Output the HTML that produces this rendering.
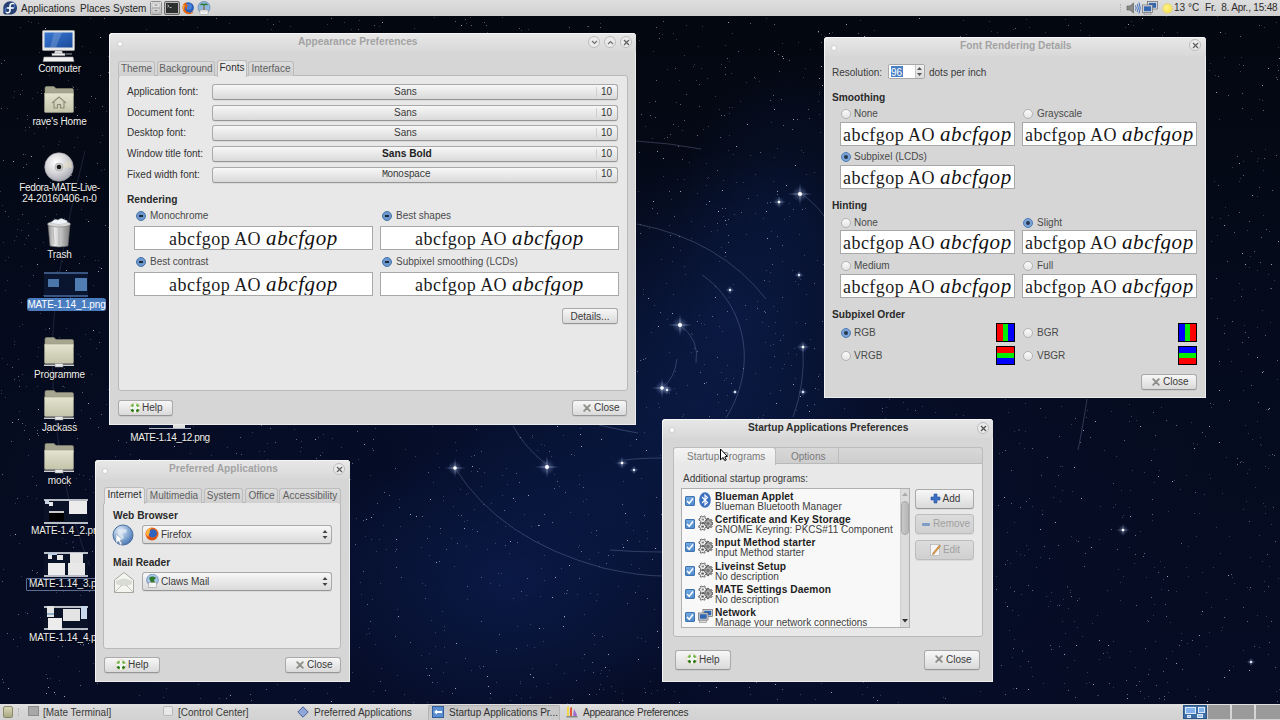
<!DOCTYPE html>
<html><head><meta charset="utf-8">
<style>
*{box-sizing:border-box;margin:0;padding:0}
html,body{width:1280px;height:720px;overflow:hidden}
body{position:relative;font-family:"Liberation Sans",sans-serif;font-size:10px;color:#3c3c3c;background:#050b1c}
.a{position:absolute}
#bg{position:absolute;left:0;top:0;width:1280px;height:720px;
background:
radial-gradient(ellipse 200px 150px at 510px 580px, rgba(12,32,84,.6), rgba(12,32,84,0) 100%),
radial-gradient(ellipse 220px 160px at 680px 440px, rgba(12,32,80,.5), rgba(12,32,80,0) 100%),
radial-gradient(ellipse 150px 170px at 730px 320px, rgba(14,34,86,.55), rgba(14,34,86,0) 100%),
radial-gradient(ellipse 110px 150px at 790px 210px, rgba(12,30,80,.4), rgba(12,30,80,0) 100%),
radial-gradient(ellipse 620px 360px at 600px 500px, rgba(8,20,64,.55), rgba(8,20,64,0) 100%),
radial-gradient(ellipse 120px 90px at 390px 470px, rgba(2,5,14,.45), rgba(2,5,14,0) 100%),
radial-gradient(ellipse 160px 60px at 620px 690px, rgba(2,5,14,.35), rgba(2,5,14,0) 100%),
linear-gradient(180deg,#03070f 0%,#050b1d 45%,#060c24 100%);}
.panel{position:absolute;left:0;width:1280px;height:16px;background:linear-gradient(#dcdcdc,#d2d2d2);}
.ptxt{position:absolute;font-size:10px;color:#2a2a2a;white-space:pre;line-height:12px}
.win{position:absolute;background:#d6d6d6;border-radius:4px 4px 0 0;box-shadow:inset 1px 1px 0 #f4f4f4, inset -1px -1px 0 #ececec;}
.tbar{position:absolute;left:0;top:0;right:0;height:19px;border-radius:4px 4px 0 0;background:linear-gradient(#e8e8e8,#d8d8d8);box-shadow:inset 1px 1px 0 #f6f6f6}
.title{position:absolute;top:3px;left:0;right:0;text-align:center;font-weight:bold;font-size:10.2px;color:#a0a0a0;white-space:pre;line-height:12px}
.dot{position:absolute;width:4px;height:4px;margin:1px 0 0 1px;border-radius:50%;background:#fff;box-shadow:0 0 0 1px #d2d2d2}
.wbtn{position:absolute;width:12px;height:12px;border-radius:50%;border:1px solid #bcbcbc;background:#ebebeb}
.pane{position:absolute;background:#e8e8e8;border:1px solid #b9b9b9;border-radius:3px}
.tab{position:absolute;height:15px;background:linear-gradient(#dcdcdc,#d0d0d0);border:1px solid #bcbcbc;border-bottom:none;border-radius:3px 3px 0 0;text-align:center;font-size:10px;line-height:14px;color:#606060;white-space:pre}
.tab.act{background:#e8e8e8;color:#2e2e2e;height:17px;z-index:2;line-height:13px}
.btn{position:absolute;border:1px solid #a9a9a9;border-bottom-color:#969696;border-radius:3px;background:linear-gradient(#f7f7f7,#dadada);box-shadow:0 1px 0 rgba(0,0,0,.06);text-align:center;color:#3a3a3a;font-size:10px;white-space:pre}
.lbl{position:absolute;white-space:pre;font-size:10px;line-height:12px;color:#333}
.b{font-weight:bold;font-size:10.2px}
.prev{position:absolute;background:#fff;border:1px solid #a8a8a8;font-family:"Liberation Serif",serif;color:#111;white-space:pre;text-align:center;overflow:hidden}
.prev i{font-style:italic;font-size:21px;letter-spacing:.6px}
.prev .r{font-size:18px;letter-spacing:.45px;color:#1a1a1a}
.p2{text-align:left;padding-left:2px;line-height:22px}
.radio{position:absolute;width:10px;height:10px;border-radius:50%;border:1px solid #b3b3b3;background:linear-gradient(#fbfbfb,#e4e4e4)}
.radio.on{background:#7ba3d6;border-color:#4f7cb5}
.radio.on::after{content:"";position:absolute;left:2px;top:2px;width:4px;height:4px;border-radius:50%;background:#25374e}
.rmin{position:absolute;width:10px;height:10px;border-radius:50%;background:#6b97cc;border:1px solid #4a74a8}
.rmin::after{content:"";position:absolute;left:2px;top:3px;width:4px;height:2px;background:#1d2a3a}
.dl{position:absolute;color:#eeeeee;font-size:10px;text-align:center;white-space:pre;line-height:11px;text-shadow:0 1px 1px #000;letter-spacing:-.15px}
</style></head><body>
<div id="bg"></div>
<svg class="a" style="left:0;top:0" width="1280" height="720" viewBox="0 0 1280 720">
<defs><radialGradient id="glow"><stop offset="0" stop-color="#fff" stop-opacity=".9"/><stop offset=".3" stop-color="#cfe0ff" stop-opacity=".3"/><stop offset="1" stop-color="#8fb0ff" stop-opacity="0"/></radialGradient></defs>
<path fill="#c8d4f0" fill-opacity="0.25" d="M596 365h1v1h-1zM1015 81h1v1h-1zM837 440h1v1h-1zM19 380h1v1h-1zM243 182h1v1h-1zM664 457h1v1h-1zM848 331h1v1h-1zM906 233h1v1h-1zM513 598h1v1h-1zM1226 599h1v1h-1zM268 642h1v1h-1zM1255 289h1v1h-1zM806 552h1v1h-1zM970 97h1v1h-1zM227 401h1v1h-1zM244 520h1v1h-1zM824 96h1v1h-1zM421 220h1v1h-1zM115 417h1v1h-1zM770 272h1v1h-1zM1228 349h1v1h-1zM1109 142h1v1h-1zM1163 579h1v1h-1zM773 306h1v1h-1zM50 678h1v1h-1zM763 218h1v1h-1zM922 63h1v1h-1zM359 647h1v1h-1zM21 201h1v1h-1zM77 137h1v1h-1zM732 107h1v1h-1zM885 418h1v1h-1zM897 678h1v1h-1zM408 704h1v1h-1zM1153 615h1v1h-1zM1012 610h1v1h-1zM800 279h1v1h-1zM497 522h1v1h-1zM564 593h1v1h-1zM327 24h1v1h-1zM868 155h1v1h-1zM1159 470h1v1h-1zM1170 622h1v1h-1zM746 234h1v1h-1zM910 670h1v1h-1zM216 326h1v1h-1zM1257 327h1v1h-1zM40 617h1v1h-1zM907 409h1v1h-1zM1013 29h1v1h-1zM304 113h1v1h-1zM876 153h1v1h-1zM229 23h1v1h-1zM914 139h1v1h-1zM443 496h1v1h-1zM786 536h1v1h-1zM1014 639h1v1h-1zM1194 513h1v1h-1zM1020 666h1v1h-1zM446 73h1v1h-1zM704 545h1v1h-1zM36 573h1v1h-1zM1024 135h1v1h-1zM1009 113h1v1h-1zM882 667h1v1h-1zM1215 75h1v1h-1zM717 230h1v1h-1zM1082 636h1v1h-1zM1089 682h1v1h-1zM733 154h1v1h-1zM644 432h1v1h-1zM1241 371h1v1h-1zM1025 403h1v1h-1zM884 61h1v1h-1zM345 342h1v1h-1zM610 234h1v1h-1zM791 653h1v1h-1zM997 32h1v1h-1zM291 489h1v1h-1zM455 442h1v1h-1zM936 100h1v1h-1zM321 152h1v1h-1zM559 275h1v1h-1zM678 126h1v1h-1zM808 455h1v1h-1zM1155 233h1v1h-1zM1136 108h1v1h-1zM930 195h1v1h-1zM1167 682h1v1h-1zM647 538h1v1h-1zM878 146h1v1h-1zM136 42h1v1h-1zM659 407h1v1h-1zM1268 654h1v1h-1zM79 671h1v1h-1zM979 241h1v1h-1zM519 150h1v1h-1zM806 294h1v1h-1zM996 576h1v1h-1zM982 542h1v1h-1zM925 65h1v1h-1zM600 23h1v1h-1zM818 445h1v1h-1zM1209 474h1v1h-1zM844 408h1v1h-1zM328 292h1v1h-1zM250 274h1v1h-1zM321 639h1v1h-1zM650 681h1v1h-1zM58 656h1v1h-1zM604 132h1v1h-1zM539 378h1v1h-1zM379 26h1v1h-1zM94 639h1v1h-1zM611 686h1v1h-1zM583 156h1v1h-1zM676 102h1v1h-1zM855 329h1v1h-1zM940 180h1v1h-1zM964 147h1v1h-1zM51 58h1v1h-1zM544 445h1v1h-1zM693 66h1v1h-1zM478 345h1v1h-1zM798 545h1v1h-1zM1179 310h1v1h-1zM124 618h1v1h-1zM106 404h1v1h-1zM888 211h1v1h-1zM458 515h1v1h-1zM150 504h1v1h-1zM561 568h1v1h-1zM1145 187h1v1h-1zM468 266h1v1h-1zM496 150h1v1h-1zM1128 210h1v1h-1zM660 390h1v1h-1zM668 542h1v1h-1zM906 646h1v1h-1zM1226 457h1v1h-1zM909 568h1v1h-1zM1268 274h1v1h-1zM262 308h1v1h-1zM1241 57h1v1h-1zM230 59h1v1h-1zM748 642h1v1h-1zM139 143h1v1h-1zM301 509h1v1h-1zM287 143h1v1h-1zM221 537h1v1h-1zM702 578h1v1h-1zM618 168h1v1h-1zM1213 567h1v1h-1zM675 371h1v1h-1zM1268 468h1v1h-1zM14 341h1v1h-1zM201 124h1v1h-1zM332 614h1v1h-1zM815 699h1v1h-1zM1052 73h1v1h-1zM917 83h1v1h-1zM600 673h1v1h-1zM534 647h1v1h-1zM1058 159h1v1h-1zM399 230h1v1h-1zM460 489h1v1h-1zM1062 466h1v1h-1zM483 504h1v1h-1zM722 331h1v1h-1zM1269 566h1v1h-1zM789 216h1v1h-1zM691 221h1v1h-1zM502 475h1v1h-1zM256 519h1v1h-1zM425 585h1v1h-1zM907 140h1v1h-1zM1071 424h1v1h-1zM290 124h1v1h-1zM982 581h1v1h-1zM424 300h1v1h-1zM24 244h1v1h-1zM833 89h1v1h-1zM1156 393h1v1h-1zM803 152h1v1h-1zM421 655h1v1h-1zM174 638h1v1h-1zM718 402h1v1h-1zM369 633h1v1h-1zM734 588h1v1h-1zM701 68h1v1h-1zM944 279h1v1h-1zM1029 27h1v1h-1zM599 114h1v1h-1zM729 135h1v1h-1zM337 407h1v1h-1zM1094 297h1v1h-1zM724 639h1v1h-1zM1152 520h1v1h-1zM962 226h1v1h-1zM89 102h1v1h-1zM643 289h1v1h-1zM889 378h1v1h-1zM392 288h1v1h-1zM852 612h1v1h-1zM726 638h1v1h-1zM1014 101h1v1h-1zM1217 16h1v1h-1zM383 239h1v1h-1zM1146 577h1v1h-1zM456 419h1v1h-1zM40 634h1v1h-1zM605 158h1v1h-1zM1181 633h1v1h-1zM1073 260h1v1h-1zM259 451h1v1h-1zM1127 50h1v1h-1zM1113 507h1v1h-1zM891 661h1v1h-1zM101 170h1v1h-1zM909 151h1v1h-1zM755 174h1v1h-1zM1186 475h1v1h-1zM564 379h1v1h-1zM58 429h1v1h-1zM321 569h1v1h-1zM365 536h1v1h-1zM357 393h1v1h-1zM1148 696h1v1h-1zM591 532h1v1h-1zM1189 360h1v1h-1zM712 460h1v1h-1zM843 555h1v1h-1zM666 671h1v1h-1zM1007 560h1v1h-1zM626 168h1v1h-1zM639 40h1v1h-1zM230 120h1v1h-1zM635 315h1v1h-1zM337 565h1v1h-1zM1161 407h1v1h-1zM1013 180h1v1h-1zM398 45h1v1h-1zM795 378h1v1h-1zM220 191h1v1h-1zM78 299h1v1h-1zM277 684h1v1h-1zM181 286h1v1h-1zM543 69h1v1h-1zM294 190h1v1h-1zM782 43h1v1h-1zM832 56h1v1h-1zM889 611h1v1h-1zM1135 334h1v1h-1zM276 255h1v1h-1zM703 129h1v1h-1zM275 338h1v1h-1zM1104 157h1v1h-1zM93 492h1v1h-1zM351 29h1v1h-1zM915 201h1v1h-1zM197 660h1v1h-1zM26 238h1v1h-1zM106 623h1v1h-1zM987 373h1v1h-1zM504 180h1v1h-1zM193 426h1v1h-1zM400 308h1v1h-1zM174 502h1v1h-1zM929 474h1v1h-1zM289 217h1v1h-1zM276 44h1v1h-1zM300 451h1v1h-1zM547 286h1v1h-1zM491 242h1v1h-1zM358 125h1v1h-1zM307 80h1v1h-1zM541 120h1v1h-1zM29 285h1v1h-1zM81 294h1v1h-1zM634 419h1v1h-1zM417 190h1v1h-1zM444 630h1v1h-1zM335 476h1v1h-1zM526 302h1v1h-1zM1062 621h1v1h-1zM1164 42h1v1h-1zM649 228h1v1h-1zM1251 119h1v1h-1zM292 484h1v1h-1zM1 390h1v1h-1zM702 446h1v1h-1zM1064 683h1v1h-1zM444 626h1v1h-1zM1234 583h1v1h-1zM796 354h1v1h-1zM684 179h1v1h-1zM416 138h1v1h-1zM161 60h1v1h-1zM131 501h1v1h-1zM578 547h1v1h-1zM68 191h1v1h-1zM322 508h1v1h-1zM1061 406h1v1h-1zM1026 102h1v1h-1zM857 175h1v1h-1zM537 450h1v1h-1zM1195 696h1v1h-1zM913 97h1v1h-1zM154 243h1v1h-1zM694 348h1v1h-1zM980 691h1v1h-1zM188 136h1v1h-1zM1195 189h1v1h-1zM154 239h1v1h-1zM351 173h1v1h-1zM468 195h1v1h-1zM82 630h1v1h-1zM100 142h1v1h-1zM507 56h1v1h-1zM841 445h1v1h-1zM225 34h1v1h-1zM152 67h1v1h-1zM965 229h1v1h-1zM1014 522h1v1h-1zM515 501h1v1h-1zM1164 32h1v1h-1zM291 283h1v1h-1zM841 574h1v1h-1zM817 260h1v1h-1zM1159 237h1v1h-1zM429 526h1v1h-1zM227 89h1v1h-1zM448 312h1v1h-1zM643 294h1v1h-1zM688 671h1v1h-1zM139 695h1v1h-1zM1232 167h1v1h-1zM904 138h1v1h-1zM867 668h1v1h-1zM190 453h1v1h-1zM646 407h1v1h-1zM1072 491h1v1h-1zM852 305h1v1h-1zM294 429h1v1h-1zM572 424h1v1h-1zM1192 121h1v1h-1zM1271 524h1v1h-1zM943 697h1v1h-1zM321 571h1v1h-1zM686 611h1v1h-1zM358 459h1v1h-1zM710 558h1v1h-1zM1020 120h1v1h-1zM128 41h1v1h-1zM1107 590h1v1h-1zM790 636h1v1h-1zM1122 517h1v1h-1zM856 312h1v1h-1zM597 105h1v1h-1zM1205 436h1v1h-1zM942 264h1v1h-1zM544 580h1v1h-1zM443 500h1v1h-1zM582 658h1v1h-1zM951 430h1v1h-1zM82 304h1v1h-1zM564 673h1v1h-1zM889 478h1v1h-1zM322 305h1v1h-1zM1050 601h1v1h-1zM113 266h1v1h-1zM926 476h1v1h-1zM1149 669h1v1h-1zM810 339h1v1h-1zM85 334h1v1h-1zM268 270h1v1h-1zM505 526h1v1h-1zM936 550h1v1h-1zM1209 632h1v1h-1zM449 385h1v1h-1zM142 559h1v1h-1zM649 102h1v1h-1zM166 77h1v1h-1zM376 551h1v1h-1zM530 53h1v1h-1zM578 400h1v1h-1zM198 684h1v1h-1zM1234 300h1v1h-1zM912 124h1v1h-1zM37 92h1v1h-1zM59 302h1v1h-1zM1135 667h1v1h-1zM641 638h1v1h-1zM383 525h1v1h-1zM471 311h1v1h-1zM459 312h1v1h-1zM63 591h1v1h-1zM676 393h1v1h-1zM285 84h1v1h-1zM402 349h1v1h-1zM959 351h1v1h-1zM520 681h1v1h-1zM760 677h1v1h-1zM766 270h1v1h-1zM780 422h1v1h-1zM68 80h1v1h-1zM346 563h1v1h-1zM1101 293h1v1h-1zM1064 242h1v1h-1zM73 541h1v1h-1zM963 415h1v1h-1zM1259 647h1v1h-1zM484 324h1v1h-1zM853 393h1v1h-1zM717 651h1v1h-1zM158 617h1v1h-1zM40 313h1v1h-1zM863 655h1v1h-1zM135 527h1v1h-1zM750 155h1v1h-1zM210 257h1v1h-1zM666 283h1v1h-1zM1078 262h1v1h-1zM615 691h1v1h-1zM893 177h1v1h-1zM935 412h1v1h-1zM82 583h1v1h-1zM583 351h1v1h-1zM964 86h1v1h-1zM727 395h1v1h-1zM280 153h1v1h-1zM930 198h1v1h-1zM26 386h1v1h-1zM375 190h1v1h-1zM621 204h1v1h-1zM992 195h1v1h-1zM299 328h1v1h-1zM933 665h1v1h-1zM725 256h1v1h-1zM131 405h1v1h-1zM79 474h1v1h-1zM667 69h1v1h-1zM236 378h1v1h-1zM534 350h1v1h-1zM719 109h1v1h-1zM1099 659h1v1h-1zM1225 33h1v1h-1zM1062 490h1v1h-1zM1249 589h1v1h-1zM429 255h1v1h-1zM986 196h1v1h-1zM225 119h1v1h-1zM613 555h1v1h-1zM305 466h1v1h-1zM236 176h1v1h-1zM1012 388h1v1h-1zM977 184h1v1h-1zM530 697h1v1h-1zM486 214h1v1h-1zM18 359h1v1h-1zM83 645h1v1h-1zM581 272h1v1h-1zM349 662h1v1h-1zM237 255h1v1h-1zM393 142h1v1h-1zM674 388h1v1h-1zM104 169h1v1h-1zM645 126h1v1h-1zM1083 336h1v1h-1zM1208 689h1v1h-1zM976 292h1v1h-1zM271 29h1v1h-1zM595 142h1v1h-1zM390 45h1v1h-1zM792 270h1v1h-1zM799 234h1v1h-1zM1131 416h1v1h-1zM691 333h1v1h-1zM1092 623h1v1h-1zM651 693h1v1h-1zM219 514h1v1h-1zM444 401h1v1h-1zM1181 370h1v1h-1zM2 358h1v1h-1zM735 451h1v1h-1zM115 358h1v1h-1zM821 683h1v1h-1zM326 637h1v1h-1zM627 348h1v1h-1zM1077 362h1v1h-1zM1036 567h1v1h-1zM1043 225h1v1h-1zM1177 32h1v1h-1zM83 475h1v1h-1zM1257 615h1v1h-1zM1261 445h1v1h-1zM630 281h1v1h-1zM889 371h1v1h-1zM878 664h1v1h-1zM1187 643h1v1h-1zM991 245h1v1h-1zM669 352h1v1h-1zM1104 384h1v1h-1zM953 188h1v1h-1zM743 182h1v1h-1zM90 52h1v1h-1zM530 296h1v1h-1zM607 676h1v1h-1zM1155 189h1v1h-1zM1277 379h1v1h-1zM981 55h1v1h-1zM829 502h1v1h-1zM554 89h1v1h-1zM1222 627h1v1h-1zM560 104h1v1h-1zM734 528h1v1h-1zM59 505h1v1h-1zM70 342h1v1h-1zM93 285h1v1h-1zM623 420h1v1h-1zM1259 99h1v1h-1zM283 612h1v1h-1zM574 268h1v1h-1zM1250 557h1v1h-1zM859 526h1v1h-1zM289 546h1v1h-1zM332 438h1v1h-1zM510 700h1v1h-1zM1168 57h1v1h-1zM1051 592h1v1h-1zM956 414h1v1h-1zM903 402h1v1h-1zM351 406h1v1h-1zM1144 472h1v1h-1zM1032 305h1v1h-1zM775 333h1v1h-1zM451 538h1v1h-1zM1060 278h1v1h-1zM459 386h1v1h-1zM479 468h1v1h-1zM320 138h1v1h-1zM431 620h1v1h-1zM607 232h1v1h-1zM1263 170h1v1h-1zM437 319h1v1h-1zM290 267h1v1h-1zM80 595h1v1h-1zM746 82h1v1h-1zM1104 59h1v1h-1zM27 496h1v1h-1zM413 338h1v1h-1zM719 261h1v1h-1zM319 217h1v1h-1zM21 230h1v1h-1zM600 368h1v1h-1zM844 492h1v1h-1zM529 284h1v1h-1zM600 380h1v1h-1zM1009 630h1v1h-1zM28 223h1v1h-1zM1019 443h1v1h-1zM582 289h1v1h-1zM1069 67h1v1h-1zM1243 390h1v1h-1zM397 609h1v1h-1zM17 118h1v1h-1zM819 92h1v1h-1zM758 417h1v1h-1zM277 324h1v1h-1zM427 675h1v1h-1zM130 454h1v1h-1zM180 155h1v1h-1zM1197 46h1v1h-1zM490 583h1v1h-1zM915 143h1v1h-1zM1239 181h1v1h-1zM1174 480h1v1h-1zM239 179h1v1h-1zM857 448h1v1h-1zM918 356h1v1h-1zM630 280h1v1h-1zM475 243h1v1h-1zM758 645h1v1h-1zM723 180h1v1h-1zM43 146h1v1h-1zM974 513h1v1h-1zM1056 118h1v1h-1zM488 76h1v1h-1zM48 93h1v1h-1zM244 93h1v1h-1zM820 132h1v1h-1zM685 274h1v1h-1zM727 365h1v1h-1zM248 247h1v1h-1zM1136 420h1v1h-1zM694 663h1v1h-1zM491 503h1v1h-1zM905 641h1v1h-1zM948 612h1v1h-1zM184 294h1v1h-1zM168 553h1v1h-1zM805 208h1v1h-1zM777 148h1v1h-1zM1097 695h1v1h-1zM468 493h1v1h-1zM1087 153h1v1h-1zM434 17h1v1h-1zM3 242h1v1h-1zM1269 455h1v1h-1zM917 176h1v1h-1zM539 235h1v1h-1zM400 526h1v1h-1zM207 40h1v1h-1zM235 519h1v1h-1zM863 682h1v1h-1zM126 41h1v1h-1zM1055 486h1v1h-1zM1096 272h1v1h-1zM821 34h1v1h-1zM38 127h1v1h-1zM1055 253h1v1h-1zM867 687h1v1h-1zM991 451h1v1h-1zM14 344h1v1h-1zM770 367h1v1h-1zM371 330h1v1h-1zM619 290h1v1h-1zM457 704h1v1h-1zM193 119h1v1h-1zM771 541h1v1h-1zM618 107h1v1h-1zM1140 531h1v1h-1zM864 163h1v1h-1zM267 459h1v1h-1zM1017 44h1v1h-1zM1107 187h1v1h-1zM972 248h1v1h-1zM891 517h1v1h-1zM151 82h1v1h-1zM467 270h1v1h-1zM1248 433h1v1h-1zM479 298h1v1h-1zM829 259h1v1h-1zM322 233h1v1h-1zM1022 650h1v1h-1zM484 97h1v1h-1zM817 630h1v1h-1zM326 538h1v1h-1zM1123 259h1v1h-1zM258 216h1v1h-1zM356 518h1v1h-1zM818 568h1v1h-1zM245 98h1v1h-1zM1014 431h1v1h-1zM580 428h1v1h-1zM45 306h1v1h-1zM1111 411h1v1h-1zM1034 78h1v1h-1zM125 80h1v1h-1zM200 698h1v1h-1zM857 125h1v1h-1zM1056 80h1v1h-1zM396 318h1v1h-1zM1 393h1v1h-1zM1131 64h1v1h-1zM529 374h1v1h-1zM137 111h1v1h-1zM682 416h1v1h-1zM1264 591h1v1h-1zM1200 160h1v1h-1zM1165 342h1v1h-1zM922 550h1v1h-1zM585 338h1v1h-1zM418 406h1v1h-1zM58 282h1v1h-1zM42 71h1v1h-1zM1206 592h1v1h-1zM405 270h1v1h-1zM489 137h1v1h-1zM19 543h1v1h-1zM927 560h1v1h-1zM943 224h1v1h-1zM219 698h1v1h-1zM1030 99h1v1h-1zM653 51h1v1h-1zM762 580h1v1h-1zM314 519h1v1h-1zM291 59h1v1h-1zM528 392h1v1h-1zM723 216h1v1h-1zM863 247h1v1h-1zM483 202h1v1h-1zM380 221h1v1h-1zM38 347h1v1h-1zM1125 264h1v1h-1zM673 33h1v1h-1zM1005 399h1v1h-1zM440 533h1v1h-1zM929 480h1v1h-1zM683 414h1v1h-1zM1048 606h1v1h-1zM963 440h1v1h-1zM1163 50h1v1h-1zM480 668h1v1h-1zM626 522h1v1h-1zM1131 21h1v1h-1zM676 39h1v1h-1zM1196 101h1v1h-1zM350 479h1v1h-1zM427 298h1v1h-1zM292 184h1v1h-1zM823 433h1v1h-1zM1269 231h1v1h-1zM1076 45h1v1h-1zM1243 509h1v1h-1zM956 544h1v1h-1zM415 456h1v1h-1zM1243 161h1v1h-1zM1070 592h1v1h-1zM78 519h1v1h-1zM1144 698h1v1h-1zM471 456h1v1h-1zM592 157h1v1h-1zM871 393h1v1h-1zM5 290h1v1h-1zM290 168h1v1h-1zM937 438h1v1h-1zM800 694h1v1h-1zM592 633h1v1h-1zM14 240h1v1h-1zM1270 288h1v1h-1zM884 83h1v1h-1zM506 102h1v1h-1zM541 568h1v1h-1zM1251 151h1v1h-1zM290 26h1v1h-1zM1146 217h1v1h-1zM671 199h1v1h-1zM84 256h1v1h-1zM332 166h1v1h-1zM115 416h1v1h-1zM127 669h1v1h-1zM918 379h1v1h-1zM1048 357h1v1h-1zM36 498h1v1h-1zM421 547h1v1h-1zM529 378h1v1h-1zM368 628h1v1h-1zM987 268h1v1h-1zM1257 421h1v1h-1zM796 673h1v1h-1zM299 168h1v1h-1zM37 356h1v1h-1zM471 670h1v1h-1zM1059 382h1v1h-1zM64 499h1v1h-1zM1172 651h1v1h-1zM86 219h1v1h-1zM1127 259h1v1h-1zM456 156h1v1h-1zM789 469h1v1h-1zM684 55h1v1h-1zM5 397h1v1h-1zM286 153h1v1h-1zM360 397h1v1h-1zM888 303h1v1h-1zM267 19h1v1h-1zM175 108h1v1h-1zM176 225h1v1h-1zM873 572h1v1h-1zM1032 165h1v1h-1zM72 542h1v1h-1zM1263 215h1v1h-1zM1130 651h1v1h-1zM1219 364h1v1h-1zM729 61h1v1h-1zM946 603h1v1h-1zM729 297h1v1h-1zM587 59h1v1h-1zM101 308h1v1h-1zM708 126h1v1h-1zM810 49h1v1h-1zM757 195h1v1h-1zM264 157h1v1h-1zM197 27h1v1h-1zM371 539h1v1h-1zM443 672h1v1h-1zM329 461h1v1h-1zM182 535h1v1h-1zM1197 444h1v1h-1zM415 277h1v1h-1zM922 171h1v1h-1zM708 483h1v1h-1zM707 178h1v1h-1zM375 411h1v1h-1zM109 173h1v1h-1zM260 149h1v1h-1zM768 446h1v1h-1zM784 219h1v1h-1zM703 545h1v1h-1zM795 281h1v1h-1zM788 555h1v1h-1zM702 475h1v1h-1zM548 683h1v1h-1zM213 368h1v1h-1zM212 627h1v1h-1zM912 133h1v1h-1zM574 455h1v1h-1zM210 261h1v1h-1zM1113 94h1v1h-1zM767 203h1v1h-1zM624 214h1v1h-1zM297 317h1v1h-1zM304 688h1v1h-1zM559 486h1v1h-1zM561 292h1v1h-1zM669 393h1v1h-1zM1216 527h1v1h-1zM1264 27h1v1h-1zM1048 206h1v1h-1zM25 130h1v1h-1zM68 233h1v1h-1zM307 272h1v1h-1zM141 652h1v1h-1zM350 420h1v1h-1zM309 145h1v1h-1zM427 702h1v1h-1zM652 138h1v1h-1zM826 87h1v1h-1zM108 389h1v1h-1zM337 544h1v1h-1zM796 322h1v1h-1zM318 553h1v1h-1zM164 365h1v1h-1zM579 545h1v1h-1zM1180 489h1v1h-1zM672 261h1v1h-1zM989 21h1v1h-1zM325 294h1v1h-1zM544 555h1v1h-1zM134 355h1v1h-1zM381 668h1v1h-1zM151 168h1v1h-1zM982 177h1v1h-1zM1025 431h1v1h-1zM237 63h1v1h-1zM671 426h1v1h-1zM526 595h1v1h-1zM988 491h1v1h-1zM318 437h1v1h-1zM777 311h1v1h-1zM408 232h1v1h-1zM1244 325h1v1h-1zM535 399h1v1h-1zM466 23h1v1h-1zM609 670h1v1h-1zM228 363h1v1h-1zM370 475h1v1h-1zM328 56h1v1h-1zM750 507h1v1h-1zM1199 513h1v1h-1zM1118 140h1v1h-1zM804 604h1v1h-1zM327 340h1v1h-1zM451 416h1v1h-1zM324 98h1v1h-1zM672 523h1v1h-1zM366 634h1v1h-1zM199 281h1v1h-1zM428 265h1v1h-1zM453 506h1v1h-1zM529 424h1v1h-1zM10 535h1v1h-1zM301 441h1v1h-1zM1224 325h1v1h-1zM397 675h1v1h-1zM1204 71h1v1h-1zM863 80h1v1h-1zM227 225h1v1h-1zM367 95h1v1h-1zM671 537h1v1h-1zM121 517h1v1h-1zM179 354h1v1h-1zM1005 364h1v1h-1zM499 585h1v1h-1zM553 387h1v1h-1zM770 345h1v1h-1zM54 218h1v1h-1zM977 346h1v1h-1zM1000 374h1v1h-1zM502 17h1v1h-1zM697 663h1v1h-1zM872 88h1v1h-1zM439 467h1v1h-1zM627 310h1v1h-1zM1239 283h1v1h-1zM966 34h1v1h-1zM788 353h1v1h-1zM527 139h1v1h-1zM1017 371h1v1h-1zM231 671h1v1h-1zM651 332h1v1h-1zM342 144h1v1h-1zM322 671h1v1h-1zM957 429h1v1h-1zM796 454h1v1h-1zM467 520h1v1h-1zM806 174h1v1h-1zM265 533h1v1h-1zM976 200h1v1h-1zM644 688h1v1h-1zM752 663h1v1h-1zM1147 620h1v1h-1zM561 165h1v1h-1zM464 521h1v1h-1zM81 209h1v1h-1zM380 583h1v1h-1zM19 326h1v1h-1zM694 64h1v1h-1zM669 225h1v1h-1zM199 348h1v1h-1zM749 480h1v1h-1zM1262 561h1v1h-1zM341 447h1v1h-1zM680 250h1v1h-1zM487 549h1v1h-1zM1240 71h1v1h-1zM433 482h1v1h-1zM1206 646h1v1h-1zM117 551h1v1h-1zM1002 452h1v1h-1zM219 114h1v1h-1zM62 538h1v1h-1zM132 651h1v1h-1zM762 418h1v1h-1zM97 307h1v1h-1zM1193 443h1v1h-1zM587 26h1v1h-1zM89 111h1v1h-1zM689 162h1v1h-1zM399 499h1v1h-1zM1077 325h1v1h-1zM372 448h1v1h-1zM1168 168h1v1h-1zM239 139h1v1h-1zM819 114h1v1h-1zM773 181h1v1h-1zM1095 162h1v1h-1zM708 177h1v1h-1zM108 56h1v1h-1zM7 280h1v1h-1zM396 62h1v1h-1zM22 324h1v1h-1zM639 568h1v1h-1zM964 551h1v1h-1zM948 258h1v1h-1zM384 147h1v1h-1zM507 484h1v1h-1zM784 364h1v1h-1zM1266 616h1v1h-1zM1277 65h1v1h-1zM1013 688h1v1h-1zM929 209h1v1h-1zM222 194h1v1h-1zM413 118h1v1h-1zM877 577h1v1h-1zM657 690h1v1h-1zM684 574h1v1h-1zM1219 119h1v1h-1zM589 559h1v1h-1zM845 52h1v1h-1zM750 515h1v1h-1zM116 232h1v1h-1zM427 133h1v1h-1zM467 599h1v1h-1zM176 317h1v1h-1zM162 201h1v1h-1zM150 443h1v1h-1zM679 80h1v1h-1zM1187 247h1v1h-1zM268 524h1v1h-1zM271 148h1v1h-1zM603 416h1v1h-1zM524 514h1v1h-1zM581 190h1v1h-1zM433 152h1v1h-1zM52 180h1v1h-1zM1136 107h1v1h-1zM1068 608h1v1h-1zM35 248h1v1h-1zM8 257h1v1h-1zM1118 161h1v1h-1zM224 600h1v1h-1zM563 168h1v1h-1zM814 172h1v1h-1zM1278 578h1v1h-1zM1260 437h1v1h-1zM948 471h1v1h-1zM691 352h1v1h-1zM1176 591h1v1h-1zM1091 136h1v1h-1zM411 48h1v1h-1zM613 58h1v1h-1zM989 218h1v1h-1zM547 414h1v1h-1zM521 698h1v1h-1zM922 406h1v1h-1zM1210 63h1v1h-1zM903 166h1v1h-1zM1131 150h1v1h-1zM116 296h1v1h-1zM135 636h1v1h-1zM312 72h1v1h-1zM550 124h1v1h-1zM881 437h1v1h-1zM404 244h1v1h-1zM379 539h1v1h-1zM711 508h1v1h-1zM131 234h1v1h-1zM783 335h1v1h-1zM690 611h1v1h-1zM267 443h1v1h-1zM1129 547h1v1h-1zM1120 600h1v1h-1zM820 449h1v1h-1zM116 243h1v1h-1zM1166 16h1v1h-1zM599 566h1v1h-1zM454 566h1v1h-1zM755 495h1v1h-1zM798 284h1v1h-1zM112 97h1v1h-1zM949 158h1v1h-1zM22 374h1v1h-1zM148 99h1v1h-1zM608 166h1v1h-1zM1170 110h1v1h-1zM1125 27h1v1h-1zM732 33h1v1h-1zM1115 504h1v1h-1zM1196 536h1v1h-1zM898 614h1v1h-1zM16 236h1v1h-1zM832 642h1v1h-1zM1065 124h1v1h-1zM905 577h1v1h-1zM1089 537h1v1h-1zM205 641h1v1h-1zM1067 667h1v1h-1zM568 300h1v1h-1zM44 627h1v1h-1zM926 669h1v1h-1zM757 301h1v1h-1zM46 128h1v1h-1zM1045 32h1v1h-1zM90 339h1v1h-1zM871 149h1v1h-1zM348 670h1v1h-1zM472 529h1v1h-1zM876 449h1v1h-1zM991 158h1v1h-1zM328 678h1v1h-1zM1099 362h1v1h-1zM476 74h1v1h-1zM682 130h1v1h-1zM870 371h1v1h-1zM759 49h1v1h-1zM320 417h1v1h-1zM791 365h1v1h-1zM935 151h1v1h-1zM699 685h1v1h-1zM594 238h1v1h-1zM289 68h1v1h-1zM782 368h1v1h-1zM696 423h1v1h-1zM1161 589h1v1h-1zM1154 482h1v1h-1zM1140 346h1v1h-1zM915 475h1v1h-1zM214 221h1v1h-1zM687 385h1v1h-1zM904 585h1v1h-1zM819 94h1v1h-1zM579 484h1v1h-1zM1228 215h1v1h-1zM600 684h1v1h-1zM322 452h1v1h-1zM566 414h1v1h-1zM84 382h1v1h-1zM473 42h1v1h-1zM464 379h1v1h-1zM390 342h1v1h-1zM234 372h1v1h-1zM734 525h1v1h-1zM273 665h1v1h-1zM389 303h1v1h-1zM270 608h1v1h-1zM700 435h1v1h-1zM552 107h1v1h-1zM479 666h1v1h-1zM1113 62h1v1h-1zM891 592h1v1h-1zM1099 539h1v1h-1zM907 371h1v1h-1zM301 551h1v1h-1zM640 224h1v1h-1zM490 394h1v1h-1zM971 469h1v1h-1zM254 180h1v1h-1zM1257 196h1v1h-1zM48 425h1v1h-1zM490 698h1v1h-1zM22 90h1v1h-1zM944 525h1v1h-1zM1130 128h1v1h-1zM882 411h1v1h-1zM721 665h1v1h-1zM423 228h1v1h-1zM987 462h1v1h-1zM902 620h1v1h-1zM704 364h1v1h-1zM725 644h1v1h-1zM984 366h1v1h-1zM91 374h1v1h-1zM618 586h1v1h-1zM1136 392h1v1h-1zM556 664h1v1h-1zM684 266h1v1h-1zM346 322h1v1h-1zM99 267h1v1h-1zM406 203h1v1h-1zM373 514h1v1h-1zM1179 45h1v1h-1zM1130 490h1v1h-1zM823 264h1v1h-1zM1083 192h1v1h-1zM726 617h1v1h-1zM1107 652h1v1h-1zM520 683h1v1h-1zM663 469h1v1h-1zM967 90h1v1h-1zM1020 117h1v1h-1zM937 465h1v1h-1zM686 25h1v1h-1zM715 96h1v1h-1zM935 101h1v1h-1zM1193 297h1v1h-1zM228 392h1v1h-1zM157 644h1v1h-1zM1255 487h1v1h-1zM849 339h1v1h-1zM514 394h1v1h-1zM373 279h1v1h-1zM50 164h1v1h-1zM55 694h1v1h-1zM1063 262h1v1h-1zM782 261h1v1h-1zM439 371h1v1h-1zM527 645h1v1h-1zM543 641h1v1h-1zM1041 384h1v1h-1zM922 465h1v1h-1zM923 504h1v1h-1zM620 99h1v1h-1zM964 129h1v1h-1zM734 214h1v1h-1zM1170 127h1v1h-1zM1080 30h1v1h-1zM288 60h1v1h-1zM706 337h1v1h-1zM370 146h1v1h-1zM1201 614h1v1h-1zM214 525h1v1h-1zM47 469h1v1h-1zM559 49h1v1h-1zM1197 130h1v1h-1zM478 236h1v1h-1zM963 20h1v1h-1zM170 232h1v1h-1zM550 697h1v1h-1zM601 670h1v1h-1zM1217 235h1v1h-1zM673 294h1v1h-1zM731 73h1v1h-1zM421 76h1v1h-1zM469 300h1v1h-1zM169 671h1v1h-1zM298 325h1v1h-1zM1043 386h1v1h-1zM884 269h1v1h-1zM51 585h1v1h-1zM664 138h1v1h-1zM1132 364h1v1h-1zM49 75h1v1h-1zM225 220h1v1h-1zM1089 263h1v1h-1zM1004 140h1v1h-1zM1024 150h1v1h-1zM1079 316h1v1h-1zM954 108h1v1h-1zM341 562h1v1h-1zM265 478h1v1h-1zM313 551h1v1h-1zM530 94h1v1h-1zM570 361h1v1h-1zM197 138h1v1h-1zM948 465h1v1h-1zM403 206h1v1h-1zM729 107h1v1h-1zM225 84h1v1h-1zM1097 385h1v1h-1zM456 450h1v1h-1zM1065 19h1v1h-1zM818 32h1v1h-1zM1063 599h1v1h-1zM1188 576h1v1h-1zM1133 25h1v1h-1zM268 161h1v1h-1zM59 680h1v1h-1zM719 326h1v1h-1zM1024 448h1v1h-1zM826 511h1v1h-1zM988 608h1v1h-1zM724 466h1v1h-1zM59 141h1v1h-1zM815 605h1v1h-1zM215 305h1v1h-1zM135 136h1v1h-1zM803 77h1v1h-1zM347 208h1v1h-1zM885 468h1v1h-1zM295 699h1v1h-1zM920 366h1v1h-1zM559 33h1v1h-1zM1001 93h1v1h-1zM437 682h1v1h-1zM533 382h1v1h-1zM721 64h1v1h-1zM413 702h1v1h-1zM383 243h1v1h-1zM451 174h1v1h-1zM1008 221h1v1h-1zM1086 683h1v1h-1zM1263 503h1v1h-1zM695 447h1v1h-1zM82 46h1v1h-1zM1270 322h1v1h-1zM25 127h1v1h-1zM1279 689h1v1h-1zM892 129h1v1h-1zM805 68h1v1h-1zM1032 676h1v1h-1zM174 157h1v1h-1zM211 455h1v1h-1zM245 555h1v1h-1zM227 495h1v1h-1zM1077 627h1v1h-1zM342 644h1v1h-1zM921 285h1v1h-1zM227 447h1v1h-1zM456 84h1v1h-1zM31 22h1v1h-1zM588 339h1v1h-1zM306 144h1v1h-1zM697 193h1v1h-1zM561 327h1v1h-1zM56 214h1v1h-1zM583 501h1v1h-1zM898 62h1v1h-1zM351 347h1v1h-1zM138 104h1v1h-1zM337 227h1v1h-1zM310 651h1v1h-1zM933 353h1v1h-1zM454 366h1v1h-1zM659 33h1v1h-1zM148 345h1v1h-1zM152 277h1v1h-1zM470 387h1v1h-1zM1154 604h1v1h-1zM851 443h1v1h-1zM860 20h1v1h-1zM794 581h1v1h-1zM240 166h1v1h-1zM1063 47h1v1h-1zM1103 225h1v1h-1zM1109 657h1v1h-1zM460 139h1v1h-1zM1107 383h1v1h-1zM282 117h1v1h-1zM1201 178h1v1h-1zM531 58h1v1h-1zM706 185h1v1h-1zM1031 347h1v1h-1zM32 98h1v1h-1zM166 121h1v1h-1zM1040 557h1v1h-1zM704 530h1v1h-1zM99 332h1v1h-1zM603 689h1v1h-1zM391 288h1v1h-1zM713 646h1v1h-1zM832 32h1v1h-1zM831 243h1v1h-1zM487 32h1v1h-1zM531 158h1v1h-1zM93 663h1v1h-1zM367 393h1v1h-1zM498 573h1v1h-1zM1041 46h1v1h-1zM879 473h1v1h-1zM765 342h1v1h-1zM699 315h1v1h-1zM908 184h1v1h-1zM154 74h1v1h-1zM564 617h1v1h-1zM620 198h1v1h-1zM740 101h1v1h-1zM830 176h1v1h-1zM386 549h1v1h-1zM110 628h1v1h-1zM223 497h1v1h-1zM775 322h1v1h-1zM1222 493h1v1h-1zM988 133h1v1h-1zM667 319h1v1h-1zM1262 100h1v1h-1zM1089 35h1v1h-1zM677 179h1v1h-1zM32 476h1v1h-1zM278 397h1v1h-1zM78 354h1v1h-1zM372 132h1v1h-1zM38 23h1v1h-1zM532 435h1v1h-1zM910 657h1v1h-1zM889 399h1v1h-1zM1068 380h1v1h-1zM1188 546h1v1h-1zM586 499h1v1h-1zM706 163h1v1h-1zM327 693h1v1h-1zM859 228h1v1h-1zM915 428h1v1h-1zM1018 615h1v1h-1zM1046 596h1v1h-1zM1120 582h1v1h-1zM1150 80h1v1h-1zM1031 135h1v1h-1zM1010 587h1v1h-1zM804 255h1v1h-1zM733 378h1v1h-1zM205 607h1v1h-1zM1233 666h1v1h-1zM630 445h1v1h-1zM759 81h1v1h-1zM939 173h1v1h-1zM1129 507h1v1h-1zM200 417h1v1h-1zM92 535h1v1h-1zM1020 554h1v1h-1zM818 389h1v1h-1zM762 322h1v1h-1zM1186 567h1v1h-1zM1165 151h1v1h-1zM1113 687h1v1h-1zM769 281h1v1h-1zM467 356h1v1h-1zM446 387h1v1h-1zM1071 536h1v1h-1zM691 238h1v1h-1zM1184 71h1v1h-1zM27 119h1v1h-1zM59 337h1v1h-1zM265 258h1v1h-1zM411 225h1v1h-1zM124 296h1v1h-1zM1198 193h1v1h-1zM82 575h1v1h-1zM1175 337h1v1h-1zM315 594h1v1h-1zM618 213h1v1h-1zM321 390h1v1h-1zM327 146h1v1h-1zM962 520h1v1h-1zM819 569h1v1h-1zM741 505h1v1h-1zM407 371h1v1h-1zM517 626h1v1h-1zM771 122h1v1h-1zM359 20h1v1h-1zM798 42h1v1h-1zM1265 466h1v1h-1zM1086 417h1v1h-1zM163 697h1v1h-1zM563 435h1v1h-1zM1007 532h1v1h-1zM1009 161h1v1h-1zM228 640h1v1h-1zM246 607h1v1h-1zM106 578h1v1h-1zM168 19h1v1h-1zM591 357h1v1h-1zM761 526h1v1h-1zM371 263h1v1h-1zM1274 280h1v1h-1zM110 599h1v1h-1zM1061 181h1v1h-1zM1010 563h1v1h-1zM137 482h1v1h-1zM622 544h1v1h-1zM1268 626h1v1h-1zM540 377h1v1h-1zM397 266h1v1h-1zM1129 404h1v1h-1zM764 633h1v1h-1zM704 324h1v1h-1zM1241 461h1v1h-1zM115 456h1v1h-1zM604 161h1v1h-1zM283 170h1v1h-1zM130 598h1v1h-1zM272 548h1v1h-1zM470 17h1v1h-1zM1200 356h1v1h-1zM755 78h1v1h-1zM1104 450h1v1h-1zM1104 216h1v1h-1zM1005 602h1v1h-1zM1257 161h1v1h-1zM658 403h1v1h-1zM598 552h1v1h-1zM326 260h1v1h-1zM626 258h1v1h-1zM703 597h1v1h-1zM326 586h1v1h-1zM721 543h1v1h-1zM375 428h1v1h-1zM990 101h1v1h-1zM564 58h1v1h-1zM62 386h1v1h-1zM48 641h1v1h-1zM280 678h1v1h-1zM1224 57h1v1h-1zM335 111h1v1h-1zM645 641h1v1h-1zM1176 149h1v1h-1zM607 340h1v1h-1zM1054 299h1v1h-1zM323 434h1v1h-1zM950 390h1v1h-1zM590 593h1v1h-1zM353 115h1v1h-1zM878 396h1v1h-1zM55 477h1v1h-1zM528 416h1v1h-1zM960 595h1v1h-1zM361 594h1v1h-1zM1265 149h1v1h-1zM13 97h1v1h-1zM1229 536h1v1h-1zM508 394h1v1h-1zM74 147h1v1h-1zM604 314h1v1h-1zM1225 207h1v1h-1zM641 478h1v1h-1zM506 468h1v1h-1zM1242 289h1v1h-1zM938 550h1v1h-1zM434 417h1v1h-1zM183 162h1v1h-1zM362 71h1v1h-1zM199 225h1v1h-1zM428 219h1v1h-1zM647 531h1v1h-1zM1260 444h1v1h-1zM468 207h1v1h-1zM387 362h1v1h-1zM746 319h1v1h-1zM398 234h1v1h-1zM21 266h1v1h-1zM444 647h1v1h-1zM664 689h1v1h-1zM920 539h1v1h-1zM228 394h1v1h-1zM1243 462h1v1h-1zM771 231h1v1h-1zM844 386h1v1h-1zM1247 587h1v1h-1zM801 150h1v1h-1zM1012 657h1v1h-1zM261 133h1v1h-1zM218 197h1v1h-1zM271 86h1v1h-1zM433 112h1v1h-1zM516 65h1v1h-1zM57 524h1v1h-1zM1246 501h1v1h-1zM1067 309h1v1h-1zM450 465h1v1h-1zM767 202h1v1h-1zM297 646h1v1h-1zM132 478h1v1h-1zM355 231h1v1h-1zM878 656h1v1h-1zM701 323h1v1h-1zM423 137h1v1h-1zM774 157h1v1h-1zM269 147h1v1h-1zM319 245h1v1h-1zM1191 422h1v1h-1zM308 383h1v1h-1zM301 447h1v1h-1zM1162 35h1v1h-1zM794 348h1v1h-1zM269 58h1v1h-1zM850 528h1v1h-1zM1018 204h1v1h-1zM264 451h1v1h-1zM590 268h1v1h-1zM755 515h1v1h-1zM721 372h1v1h-1zM412 266h1v1h-1zM351 142h1v1h-1zM106 111h1v1h-1zM183 19h1v1h-1zM1108 238h1v1h-1zM1204 60h1v1h-1zM359 34h1v1h-1zM717 632h1v1h-1zM733 284h1v1h-1zM794 670h1v1h-1zM28 455h1v1h-1zM244 272h1v1h-1zM1060 501h1v1h-1zM702 523h1v1h-1zM634 403h1v1h-1zM1041 196h1v1h-1zM316 195h1v1h-1zM1100 506h1v1h-1zM837 130h1v1h-1zM1060 466h1v1h-1zM947 650h1v1h-1zM1247 473h1v1h-1zM159 352h1v1h-1zM870 350h1v1h-1zM255 531h1v1h-1zM985 149h1v1h-1zM149 135h1v1h-1zM352 672h1v1h-1zM132 605h1v1h-1zM92 476h1v1h-1zM1022 651h1v1h-1zM189 146h1v1h-1zM445 221h1v1h-1zM567 703h1v1h-1zM34 133h1v1h-1zM466 494h1v1h-1zM824 431h1v1h-1zM592 360h1v1h-1zM1214 181h1v1h-1zM1031 667h1v1h-1zM577 594h1v1h-1zM152 165h1v1h-1zM1067 586h1v1h-1zM446 662h1v1h-1zM777 647h1v1h-1zM264 366h1v1h-1zM1164 567h1v1h-1zM187 417h1v1h-1zM546 265h1v1h-1zM523 370h1v1h-1zM46 349h1v1h-1zM98 260h1v1h-1zM221 331h1v1h-1zM178 421h1v1h-1zM161 384h1v1h-1zM766 18h1v1h-1zM545 346h1v1h-1zM551 456h1v1h-1zM637 637h1v1h-1zM325 125h1v1h-1zM397 92h1v1h-1zM1220 553h1v1h-1zM301 358h1v1h-1zM982 209h1v1h-1zM1040 334h1v1h-1zM1008 412h1v1h-1zM999 453h1v1h-1zM981 329h1v1h-1zM666 541h1v1h-1zM302 194h1v1h-1zM921 360h1v1h-1zM1249 267h1v1h-1zM285 207h1v1h-1zM654 305h1v1h-1zM654 668h1v1h-1zM1191 264h1v1h-1zM266 579h1v1h-1zM372 599h1v1h-1zM900 286h1v1h-1zM1211 607h1v1h-1zM169 398h1v1h-1zM1211 241h1v1h-1zM71 352h1v1h-1zM162 498h1v1h-1zM521 329h1v1h-1zM1168 692h1v1h-1zM262 75h1v1h-1zM1051 254h1v1h-1zM251 498h1v1h-1zM525 321h1v1h-1zM304 646h1v1h-1zM1073 98h1v1h-1zM272 368h1v1h-1zM1149 160h1v1h-1zM631 564h1v1h-1zM1070 590h1v1h-1zM1199 654h1v1h-1zM705 615h1v1h-1zM536 380h1v1h-1zM936 384h1v1h-1zM1203 207h1v1h-1zM1119 129h1v1h-1zM436 261h1v1h-1zM350 265h1v1h-1zM313 56h1v1h-1zM750 469h1v1h-1zM129 201h1v1h-1zM532 437h1v1h-1zM21 576h1v1h-1zM1027 188h1v1h-1zM220 172h1v1h-1zM1266 409h1v1h-1zM215 601h1v1h-1zM162 608h1v1h-1zM879 611h1v1h-1zM616 368h1v1h-1zM25 425h1v1h-1zM736 182h1v1h-1zM853 193h1v1h-1zM89 479h1v1h-1zM279 21h1v1h-1zM776 501h1v1h-1zM1265 506h1v1h-1zM494 311h1v1h-1zM103 653h1v1h-1zM260 281h1v1h-1zM886 407h1v1h-1zM789 203h1v1h-1zM1126 285h1v1h-1zM983 610h1v1h-1zM824 36h1v1h-1zM154 59h1v1h-1zM80 356h1v1h-1zM809 439h1v1h-1zM543 628h1v1h-1zM485 183h1v1h-1zM192 520h1v1h-1zM466 546h1v1h-1zM414 28h1v1h-1zM161 554h1v1h-1zM64 387h1v1h-1zM821 507h1v1h-1zM8 216h1v1h-1zM1129 202h1v1h-1zM267 519h1v1h-1zM596 535h1v1h-1zM290 369h1v1h-1zM931 576h1v1h-1zM65 273h1v1h-1zM1087 672h1v1h-1zM670 421h1v1h-1zM379 117h1v1h-1zM63 230h1v1h-1zM825 579h1v1h-1zM1074 621h1v1h-1zM1067 587h1v1h-1zM249 393h1v1h-1zM1058 85h1v1h-1zM1074 660h1v1h-1zM238 250h1v1h-1zM1248 354h1v1h-1zM227 249h1v1h-1zM958 293h1v1h-1zM1096 264h1v1h-1zM429 653h1v1h-1zM1265 513h1v1h-1zM495 543h1v1h-1zM182 309h1v1h-1zM1252 439h1v1h-1zM288 555h1v1h-1zM725 45h1v1h-1zM597 594h1v1h-1zM63 386h1v1h-1zM49 91h1v1h-1zM64 218h1v1h-1zM313 681h1v1h-1zM584 670h1v1h-1zM1064 230h1v1h-1zM1184 222h1v1h-1zM538 541h1v1h-1zM1129 421h1v1h-1zM1176 64h1v1h-1zM974 438h1v1h-1zM66 543h1v1h-1zM1019 429h1v1h-1zM120 320h1v1h-1zM574 210h1v1h-1zM72 350h1v1h-1zM929 626h1v1h-1zM1104 244h1v1h-1zM1140 371h1v1h-1zM767 514h1v1h-1zM49 191h1v1h-1zM199 240h1v1h-1zM183 210h1v1h-1zM1168 511h1v1h-1zM501 573h1v1h-1zM907 510h1v1h-1zM17 229h1v1h-1zM851 68h1v1h-1zM924 43h1v1h-1zM476 247h1v1h-1zM139 338h1v1h-1zM967 631h1v1h-1zM541 444h1v1h-1zM70 297h1v1h-1zM771 630h1v1h-1zM692 334h1v1h-1zM246 327h1v1h-1zM312 161h1v1h-1zM660 455h1v1h-1zM544 347h1v1h-1zM95 260h1v1h-1zM258 361h1v1h-1zM437 453h1v1h-1zM880 695h1v1h-1zM872 564h1v1h-1zM64 368h1v1h-1zM782 540h1v1h-1zM1032 506h1v1h-1zM1120 382h1v1h-1zM633 530h1v1h-1zM906 371h1v1h-1zM1094 90h1v1h-1zM178 112h1v1h-1zM707 78h1v1h-1zM1209 70h1v1h-1zM341 461h1v1h-1zM58 144h1v1h-1zM540 596h1v1h-1zM833 654h1v1h-1zM629 159h1v1h-1zM331 538h1v1h-1zM1258 158h1v1h-1zM818 101h1v1h-1zM755 213h1v1h-1zM1257 270h1v1h-1zM1204 494h1v1h-1zM483 162h1v1h-1zM987 37h1v1h-1zM18 219h1v1h-1zM830 649h1v1h-1zM477 314h1v1h-1zM1231 361h1v1h-1zM211 298h1v1h-1zM239 265h1v1h-1zM1080 23h1v1h-1zM1239 64h1v1h-1zM1026 19h1v1h-1zM422 583h1v1h-1zM1053 497h1v1h-1zM1249 469h1v1h-1zM293 78h1v1h-1zM678 518h1v1h-1zM268 604h1v1h-1zM66 564h1v1h-1zM1192 315h1v1h-1zM502 495h1v1h-1zM15 503h1v1h-1zM496 682h1v1h-1zM726 378h1v1h-1zM824 578h1v1h-1zM457 362h1v1h-1zM1043 234h1v1h-1zM1264 581h1v1h-1zM471 471h1v1h-1zM877 369h1v1h-1zM164 188h1v1h-1zM691 667h1v1h-1zM248 381h1v1h-1zM7 364h1v1h-1zM834 367h1v1h-1zM563 79h1v1h-1zM938 438h1v1h-1zM594 644h1v1h-1zM622 167h1v1h-1zM588 514h1v1h-1zM82 523h1v1h-1zM699 543h1v1h-1zM484 472h1v1h-1zM369 152h1v1h-1zM324 33h1v1h-1zM545 333h1v1h-1zM952 189h1v1h-1zM991 31h1v1h-1zM528 29h1v1h-1zM442 691h1v1h-1zM395 349h1v1h-1zM232 55h1v1h-1zM321 64h1v1h-1zM236 56h1v1h-1zM1072 309h1v1h-1zM1109 134h1v1h-1zM56 592h1v1h-1zM1154 567h1v1h-1zM662 34h1v1h-1zM1212 217h1v1h-1zM1262 310h1v1h-1zM463 195h1v1h-1zM1174 112h1v1h-1zM624 371h1v1h-1zM711 231h1v1h-1zM596 600h1v1h-1zM273 269h1v1h-1zM115 566h1v1h-1zM1180 249h1v1h-1zM442 212h1v1h-1zM102 135h1v1h-1zM951 325h1v1h-1zM821 487h1v1h-1zM465 375h1v1h-1zM174 332h1v1h-1zM925 444h1v1h-1zM219 250h1v1h-1zM610 66h1v1h-1zM1276 22h1v1h-1zM516 695h1v1h-1zM1121 490h1v1h-1zM1155 641h1v1h-1zM1132 470h1v1h-1zM1211 298h1v1h-1zM416 365h1v1h-1zM1035 232h1v1h-1zM457 89h1v1h-1zM45 216h1v1h-1zM39 52h1v1h-1zM279 82h1v1h-1zM136 125h1v1h-1zM481 486h1v1h-1zM834 210h1v1h-1zM72 86h1v1h-1zM259 273h1v1h-1zM395 551h1v1h-1zM553 248h1v1h-1zM1056 396h1v1h-1zM608 97h1v1h-1zM1135 42h1v1h-1zM194 226h1v1h-1zM1112 329h1v1h-1zM46 86h1v1h-1zM750 694h1v1h-1zM177 185h1v1h-1zM956 391h1v1h-1zM968 279h1v1h-1zM7 108h1v1h-1zM661 259h1v1h-1zM340 687h1v1h-1zM1024 555h1v1h-1zM343 640h1v1h-1zM298 281h1v1h-1zM169 231h1v1h-1zM770 393h1v1h-1zM948 299h1v1h-1zM1132 360h1v1h-1zM304 65h1v1h-1zM429 555h1v1h-1zM286 233h1v1h-1zM1211 407h1v1h-1zM110 534h1v1h-1zM842 202h1v1h-1zM819 374h1v1h-1zM505 106h1v1h-1zM910 131h1v1h-1zM786 615h1v1h-1zM986 457h1v1h-1zM903 215h1v1h-1zM57 271h1v1h-1zM572 54h1v1h-1zM1098 695h1v1h-1zM52 361h1v1h-1zM534 254h1v1h-1zM114 295h1v1h-1zM226 592h1v1h-1zM921 432h1v1h-1zM166 688h1v1h-1zM862 694h1v1h-1zM1125 244h1v1h-1zM1121 367h1v1h-1zM773 600h1v1h-1zM335 137h1v1h-1zM253 504h1v1h-1zM580 103h1v1h-1zM1042 510h1v1h-1zM1135 92h1v1h-1zM864 105h1v1h-1zM547 137h1v1h-1zM334 390h1v1h-1zM121 367h1v1h-1zM66 328h1v1h-1zM896 596h1v1h-1zM715 286h1v1h-1zM1240 178h1v1h-1zM17 646h1v1h-1zM547 268h1v1h-1zM321 140h1v1h-1zM1043 683h1v1h-1zM313 237h1v1h-1zM1118 569h1v1h-1zM1167 358h1v1h-1zM808 531h1v1h-1zM925 171h1v1h-1zM1134 563h1v1h-1zM1021 594h1v1h-1zM142 637h1v1h-1zM62 261h1v1h-1zM387 145h1v1h-1zM1080 40h1v1h-1zM1202 572h1v1h-1zM728 150h1v1h-1zM20 27h1v1h-1zM596 694h1v1h-1zM1148 96h1v1h-1zM1245 425h1v1h-1zM37 229h1v1h-1zM766 589h1v1h-1zM109 672h1v1h-1zM1033 93h1v1h-1zM77 89h1v1h-1zM573 131h1v1h-1zM512 255h1v1h-1zM148 170h1v1h-1zM558 85h1v1h-1zM443 260h1v1h-1zM183 58h1v1h-1zM182 151h1v1h-1zM186 116h1v1h-1zM729 113h1v1h-1zM502 360h1v1h-1zM143 581h1v1h-1zM773 344h1v1h-1zM435 646h1v1h-1zM282 379h1v1h-1zM28 21h1v1h-1zM690 523h1v1h-1zM90 18h1v1h-1zM264 666h1v1h-1zM339 142h1v1h-1zM312 162h1v1h-1zM536 686h1v1h-1zM380 139h1v1h-1zM1221 630h1v1h-1zM952 227h1v1h-1zM717 606h1v1h-1zM704 226h1v1h-1zM898 702h1v1h-1zM475 265h1v1h-1zM863 313h1v1h-1zM258 596h1v1h-1zM1185 109h1v1h-1zM340 57h1v1h-1zM146 29h1v1h-1zM654 609h1v1h-1zM1074 180h1v1h-1zM290 275h1v1h-1zM1259 535h1v1h-1zM1243 650h1v1h-1zM1144 77h1v1h-1zM391 178h1v1h-1zM271 345h1v1h-1zM674 691h1v1h-1zM131 125h1v1h-1zM1232 577h1v1h-1zM1278 47h1v1h-1zM435 632h1v1h-1zM721 247h1v1h-1zM1123 515h1v1h-1zM622 693h1v1h-1zM827 434h1v1h-1zM837 356h1v1h-1zM1220 218h1v1h-1zM14 91h1v1h-1zM1160 561h1v1h-1zM1152 29h1v1h-1zM698 46h1v1h-1zM1250 256h1v1h-1zM297 678h1v1h-1zM342 181h1v1h-1zM34 427h1v1h-1zM1079 598h1v1h-1zM775 666h1v1h-1zM1201 385h1v1h-1zM1078 119h1v1h-1zM763 415h1v1h-1zM373 691h1v1h-1zM1018 430h1v1h-1zM578 228h1v1h-1zM985 535h1v1h-1zM158 76h1v1h-1zM41 90h1v1h-1zM768 326h1v1h-1zM365 391h1v1h-1zM1108 336h1v1h-1zM1180 67h1v1h-1zM445 219h1v1h-1zM1097 615h1v1h-1zM45 329h1v1h-1zM1091 235h1v1h-1zM1065 633h1v1h-1zM252 432h1v1h-1zM144 491h1v1h-1zM606 110h1v1h-1zM46 674h1v1h-1zM1247 230h1v1h-1zM1187 344h1v1h-1zM1187 689h1v1h-1zM848 80h1v1h-1zM833 587h1v1h-1zM396 61h1v1h-1zM945 38h1v1h-1zM913 152h1v1h-1zM1029 498h1v1h-1zM755 373h1v1h-1zM73 628h1v1h-1zM493 129h1v1h-1zM178 166h1v1h-1zM1154 449h1v1h-1zM226 57h1v1h-1zM37 386h1v1h-1zM1116 456h1v1h-1zM20 637h1v1h-1zM76 478h1v1h-1zM0 191h1v1h-1zM603 342h1v1h-1zM891 592h1v1h-1zM496 178h1v1h-1zM474 509h1v1h-1zM205 545h1v1h-1zM509 553h1v1h-1zM185 304h1v1h-1zM702 26h1v1h-1zM1045 417h1v1h-1zM1144 98h1v1h-1zM340 534h1v1h-1zM43 242h1v1h-1zM432 426h1v1h-1zM638 586h1v1h-1zM178 171h1v1h-1zM366 170h1v1h-1zM230 251h1v1h-1zM1060 203h1v1h-1zM161 404h1v1h-1zM673 652h1v1h-1zM1091 145h1v1h-1zM874 30h1v1h-1zM143 306h1v1h-1zM532 668h1v1h-1zM530 624h1v1h-1zM570 512h1v1h-1zM561 241h1v1h-1zM1026 545h1v1h-1zM179 616h1v1h-1zM366 293h1v1h-1zM1076 540h1v1h-1zM960 568h1v1h-1zM246 372h1v1h-1zM931 253h1v1h-1zM1133 174h1v1h-1zM620 412h1v1h-1zM142 116h1v1h-1zM1135 268h1v1h-1zM796 410h1v1h-1zM267 607h1v1h-1zM550 121h1v1h-1zM108 227h1v1h-1zM792 678h1v1h-1zM1117 130h1v1h-1zM404 694h1v1h-1zM25 154h1v1h-1zM233 373h1v1h-1zM149 480h1v1h-1zM344 22h1v1h-1zM5 260h1v1h-1zM911 290h1v1h-1zM1080 212h1v1h-1zM184 246h1v1h-1zM627 254h1v1h-1zM3 569h1v1h-1zM263 566h1v1h-1zM268 328h1v1h-1zM961 37h1v1h-1zM128 34h1v1h-1zM131 100h1v1h-1zM1276 691h1v1h-1zM308 287h1v1h-1zM552 165h1v1h-1zM205 284h1v1h-1zM43 306h1v1h-1zM881 661h1v1h-1zM81 410h1v1h-1zM85 489h1v1h-1zM531 526h1v1h-1zM1102 375h1v1h-1zM224 670h1v1h-1zM349 404h1v1h-1zM579 475h1v1h-1zM1057 605h1v1h-1zM843 166h1v1h-1zM180 559h1v1h-1zM43 295h1v1h-1zM1149 148h1v1h-1zM96 348h1v1h-1zM202 196h1v1h-1zM536 313h1v1h-1zM709 641h1v1h-1zM158 361h1v1h-1zM638 191h1v1h-1zM568 258h1v1h-1zM178 186h1v1h-1zM663 176h1v1h-1zM623 481h1v1h-1zM850 511h1v1h-1zM163 465h1v1h-1zM1022 384h1v1h-1zM341 199h1v1h-1zM178 667h1v1h-1zM47 298h1v1h-1zM1213 404h1v1h-1zM554 474h1v1h-1zM1113 641h1v1h-1zM577 374h1v1h-1zM1028 549h1v1h-1zM274 660h1v1h-1zM962 380h1v1h-1zM318 114h1v1h-1zM696 80h1v1h-1zM304 465h1v1h-1zM994 98h1v1h-1zM994 53h1v1h-1zM666 422h1v1h-1zM1016 551h1v1h-1zM276 269h1v1h-1zM397 303h1v1h-1zM521 30h1v1h-1zM356 280h1v1h-1zM442 611h1v1h-1zM432 400h1v1h-1zM841 528h1v1h-1zM890 223h1v1h-1zM1038 89h1v1h-1zM639 541h1v1h-1zM1123 576h1v1h-1zM360 582h1v1h-1zM375 644h1v1h-1zM584 614h1v1h-1zM945 231h1v1h-1zM496 652h1v1h-1zM1087 410h1v1h-1zM1192 156h1v1h-1zM1210 478h1v1h-1zM724 380h1v1h-1zM19 411h1v1h-1zM25 612h1v1h-1zM582 375h1v1h-1zM253 87h1v1h-1zM2 205h1v1h-1zM405 449h1v1h-1z"/>
<path fill="#c8d4f0" fill-opacity="0.45" d="M236 368h1v1h-1zM116 573h1v1h-1zM594 319h1v1h-1zM1277 701h1v1h-1zM370 64h1v1h-1zM129 57h1v1h-1zM1028 225h1v1h-1zM270 287h1v1h-1zM273 194h1v1h-1zM252 670h1v1h-1zM902 193h1v1h-1zM716 602h1v1h-1zM1140 691h1v1h-1zM814 348h1v1h-1zM943 500h1v1h-1zM1171 258h1v1h-1zM779 71h1v1h-1zM1271 621h1v1h-1zM960 36h1v1h-1zM616 174h1v1h-1zM1141 241h1v1h-1zM254 312h1v1h-1zM635 592h1v1h-1zM274 301h1v1h-1zM632 233h1v1h-1zM582 33h1v1h-1zM805 323h1v1h-1zM482 407h1v1h-1zM834 157h1v1h-1zM1047 457h1v1h-1zM1251 385h1v1h-1zM410 642h1v1h-1zM661 514h1v1h-1zM674 216h1v1h-1zM818 376h1v1h-1zM1090 437h1v1h-1zM298 526h1v1h-1zM1065 306h1v1h-1zM161 293h1v1h-1zM23 154h1v1h-1zM236 156h1v1h-1zM660 312h1v1h-1zM17 498h1v1h-1zM232 328h1v1h-1zM656 27h1v1h-1zM1026 501h1v1h-1zM645 692h1v1h-1zM331 643h1v1h-1zM1148 621h1v1h-1zM499 704h1v1h-1zM29 439h1v1h-1zM1274 455h1v1h-1zM98 427h1v1h-1zM468 213h1v1h-1zM718 211h1v1h-1zM55 124h1v1h-1zM499 634h1v1h-1zM670 661h1v1h-1zM599 689h1v1h-1zM773 95h1v1h-1zM745 305h1v1h-1zM1143 556h1v1h-1zM460 203h1v1h-1zM723 423h1v1h-1zM1254 646h1v1h-1zM866 395h1v1h-1zM440 528h1v1h-1zM95 98h1v1h-1zM543 194h1v1h-1zM416 393h1v1h-1zM877 222h1v1h-1zM97 163h1v1h-1zM105 225h1v1h-1zM1020 388h1v1h-1zM720 137h1v1h-1zM1237 464h1v1h-1zM82 392h1v1h-1zM108 72h1v1h-1zM1151 74h1v1h-1zM184 529h1v1h-1zM314 168h1v1h-1zM432 682h1v1h-1zM632 386h1v1h-1zM1058 475h1v1h-1zM1032 590h1v1h-1zM538 117h1v1h-1zM147 462h1v1h-1zM1020 507h1v1h-1zM684 120h1v1h-1zM2 581h1v1h-1zM1097 225h1v1h-1zM673 124h1v1h-1zM391 337h1v1h-1zM1210 403h1v1h-1zM180 81h1v1h-1zM547 368h1v1h-1zM1011 470h1v1h-1zM652 559h1v1h-1zM783 125h1v1h-1zM641 114h1v1h-1zM1263 371h1v1h-1zM313 413h1v1h-1zM1164 699h1v1h-1zM770 100h1v1h-1zM843 228h1v1h-1zM821 42h1v1h-1zM185 676h1v1h-1zM601 299h1v1h-1zM882 538h1v1h-1zM622 700h1v1h-1zM410 54h1v1h-1zM1031 169h1v1h-1zM301 473h1v1h-1zM477 471h1v1h-1zM647 598h1v1h-1zM998 130h1v1h-1zM301 319h1v1h-1zM915 410h1v1h-1zM754 77h1v1h-1zM884 588h1v1h-1zM185 329h1v1h-1zM50 182h1v1h-1zM1275 541h1v1h-1zM1079 278h1v1h-1zM572 699h1v1h-1zM262 209h1v1h-1zM519 282h1v1h-1zM807 405h1v1h-1zM1249 221h1v1h-1zM1176 165h1v1h-1zM853 673h1v1h-1zM608 131h1v1h-1zM898 397h1v1h-1zM987 448h1v1h-1zM306 356h1v1h-1zM916 494h1v1h-1zM473 213h1v1h-1zM208 612h1v1h-1zM1019 286h1v1h-1zM427 538h1v1h-1zM905 445h1v1h-1zM1242 108h1v1h-1zM396 567h1v1h-1zM363 285h1v1h-1zM888 392h1v1h-1zM724 115h1v1h-1zM1276 155h1v1h-1zM620 301h1v1h-1zM567 590h1v1h-1zM14 379h1v1h-1zM1028 585h1v1h-1zM951 392h1v1h-1zM1127 237h1v1h-1zM824 162h1v1h-1zM1136 605h1v1h-1zM659 38h1v1h-1zM629 177h1v1h-1zM831 661h1v1h-1zM83 615h1v1h-1zM310 566h1v1h-1zM233 283h1v1h-1zM1264 158h1v1h-1zM435 233h1v1h-1zM357 431h1v1h-1zM231 104h1v1h-1zM251 700h1v1h-1zM523 117h1v1h-1zM741 212h1v1h-1zM367 604h1v1h-1zM527 107h1v1h-1zM699 84h1v1h-1zM595 233h1v1h-1zM1271 288h1v1h-1zM214 462h1v1h-1zM950 190h1v1h-1zM600 27h1v1h-1zM1089 88h1v1h-1zM520 437h1v1h-1zM197 579h1v1h-1zM1237 458h1v1h-1zM421 352h1v1h-1zM637 371h1v1h-1zM1049 558h1v1h-1zM943 304h1v1h-1zM1000 319h1v1h-1zM151 236h1v1h-1zM91 96h1v1h-1zM531 385h1v1h-1zM883 283h1v1h-1zM917 314h1v1h-1zM1085 40h1v1h-1zM194 670h1v1h-1zM1031 83h1v1h-1zM781 99h1v1h-1zM920 216h1v1h-1zM355 366h1v1h-1zM205 607h1v1h-1zM780 390h1v1h-1zM1199 266h1v1h-1zM1266 229h1v1h-1zM877 604h1v1h-1zM639 152h1v1h-1zM627 422h1v1h-1zM41 93h1v1h-1zM742 537h1v1h-1zM1 63h1v1h-1zM673 247h1v1h-1zM582 177h1v1h-1zM669 191h1v1h-1zM422 516h1v1h-1zM496 109h1v1h-1zM1001 249h1v1h-1zM949 343h1v1h-1zM247 109h1v1h-1zM728 219h1v1h-1zM1245 332h1v1h-1zM208 135h1v1h-1zM1023 359h1v1h-1zM364 83h1v1h-1zM567 74h1v1h-1zM300 586h1v1h-1zM251 164h1v1h-1zM877 565h1v1h-1zM439 561h1v1h-1zM1166 658h1v1h-1zM238 494h1v1h-1zM930 56h1v1h-1zM984 556h1v1h-1zM729 665h1v1h-1zM29 127h1v1h-1zM293 466h1v1h-1zM349 145h1v1h-1zM674 669h1v1h-1zM554 488h1v1h-1zM706 204h1v1h-1zM930 236h1v1h-1zM91 201h1v1h-1zM832 485h1v1h-1zM135 672h1v1h-1zM525 290h1v1h-1zM329 560h1v1h-1zM580 233h1v1h-1zM526 225h1v1h-1zM583 342h1v1h-1zM582 275h1v1h-1zM927 669h1v1h-1zM856 315h1v1h-1zM1254 251h1v1h-1zM21 302h1v1h-1zM756 506h1v1h-1zM1263 110h1v1h-1zM634 131h1v1h-1zM384 492h1v1h-1zM110 562h1v1h-1zM338 353h1v1h-1zM36 579h1v1h-1zM270 500h1v1h-1zM1040 408h1v1h-1zM1059 646h1v1h-1zM219 260h1v1h-1zM277 623h1v1h-1zM920 48h1v1h-1zM452 693h1v1h-1zM349 475h1v1h-1zM344 94h1v1h-1zM1135 535h1v1h-1zM245 614h1v1h-1zM875 492h1v1h-1zM1202 316h1v1h-1zM594 635h1v1h-1zM431 413h1v1h-1zM23 167h1v1h-1zM274 66h1v1h-1zM1042 514h1v1h-1zM73 40h1v1h-1zM411 194h1v1h-1zM236 453h1v1h-1zM640 360h1v1h-1zM928 70h1v1h-1zM1080 442h1v1h-1zM48 36h1v1h-1zM607 43h1v1h-1zM364 217h1v1h-1zM238 287h1v1h-1zM775 676h1v1h-1zM877 121h1v1h-1zM1237 156h1v1h-1zM680 104h1v1h-1zM859 517h1v1h-1zM709 416h1v1h-1zM75 107h1v1h-1zM873 697h1v1h-1zM512 71h1v1h-1zM378 269h1v1h-1zM273 24h1v1h-1zM429 115h1v1h-1zM140 42h1v1h-1zM602 636h1v1h-1zM264 47h1v1h-1zM1182 669h1v1h-1zM406 132h1v1h-1zM1058 357h1v1h-1zM899 427h1v1h-1zM985 435h1v1h-1zM1241 296h1v1h-1zM1084 566h1v1h-1zM1080 282h1v1h-1zM1148 674h1v1h-1zM827 341h1v1h-1zM529 371h1v1h-1zM882 408h1v1h-1zM722 208h1v1h-1zM425 598h1v1h-1zM984 423h1v1h-1zM592 193h1v1h-1zM228 536h1v1h-1zM451 182h1v1h-1zM583 487h1v1h-1zM175 422h1v1h-1zM242 233h1v1h-1zM455 341h1v1h-1zM566 593h1v1h-1zM261 634h1v1h-1zM1014 591h1v1h-1zM721 115h1v1h-1zM939 621h1v1h-1zM352 72h1v1h-1zM433 88h1v1h-1zM1192 640h1v1h-1zM116 160h1v1h-1zM310 557h1v1h-1zM347 377h1v1h-1zM1077 600h1v1h-1zM725 67h1v1h-1zM865 474h1v1h-1zM1152 514h1v1h-1zM890 644h1v1h-1zM27 613h1v1h-1zM434 65h1v1h-1zM855 433h1v1h-1zM588 26h1v1h-1zM817 610h1v1h-1zM465 19h1v1h-1zM1044 546h1v1h-1zM761 612h1v1h-1zM71 106h1v1h-1zM1075 697h1v1h-1zM202 406h1v1h-1zM493 64h1v1h-1zM777 236h1v1h-1zM1159 698h1v1h-1zM1179 190h1v1h-1zM1015 58h1v1h-1zM673 653h1v1h-1zM149 512h1v1h-1zM2 679h1v1h-1zM209 50h1v1h-1zM38 435h1v1h-1zM880 589h1v1h-1zM1034 197h1v1h-1zM312 287h1v1h-1zM915 668h1v1h-1zM154 659h1v1h-1zM107 569h1v1h-1zM610 95h1v1h-1zM824 567h1v1h-1zM629 36h1v1h-1zM1168 590h1v1h-1zM1109 683h1v1h-1zM789 60h1v1h-1zM103 303h1v1h-1zM565 54h1v1h-1zM1059 436h1v1h-1zM1075 418h1v1h-1zM37 572h1v1h-1zM956 209h1v1h-1zM1113 483h1v1h-1zM145 43h1v1h-1zM310 85h1v1h-1zM465 658h1v1h-1zM1068 690h1v1h-1zM316 458h1v1h-1zM470 315h1v1h-1zM700 372h1v1h-1zM581 139h1v1h-1zM670 134h1v1h-1zM881 164h1v1h-1zM749 687h1v1h-1zM477 313h1v1h-1zM22 423h1v1h-1zM950 432h1v1h-1zM116 480h1v1h-1zM1276 77h1v1h-1zM603 396h1v1h-1zM1110 48h1v1h-1zM770 202h1v1h-1zM606 563h1v1h-1zM429 191h1v1h-1zM1101 198h1v1h-1zM225 357h1v1h-1zM1240 462h1v1h-1zM756 642h1v1h-1zM256 354h1v1h-1zM880 172h1v1h-1zM899 593h1v1h-1zM511 101h1v1h-1zM655 117h1v1h-1zM765 312h1v1h-1zM946 123h1v1h-1zM471 25h1v1h-1zM848 47h1v1h-1zM86 176h1v1h-1zM814 404h1v1h-1zM1127 694h1v1h-1zM317 86h1v1h-1zM389 495h1v1h-1zM549 451h1v1h-1zM983 573h1v1h-1zM834 232h1v1h-1zM1156 685h1v1h-1zM358 29h1v1h-1zM862 583h1v1h-1zM485 357h1v1h-1zM598 157h1v1h-1zM1155 435h1v1h-1zM874 139h1v1h-1zM512 80h1v1h-1zM1247 621h1v1h-1zM466 242h1v1h-1zM541 350h1v1h-1zM809 118h1v1h-1zM311 384h1v1h-1zM925 357h1v1h-1zM479 35h1v1h-1zM1280 391h1v1h-1zM822 321h1v1h-1zM47 678h1v1h-1zM782 297h1v1h-1zM70 183h1v1h-1zM780 521h1v1h-1zM347 399h1v1h-1zM1102 365h1v1h-1zM787 587h1v1h-1zM53 460h1v1h-1zM584 654h1v1h-1zM596 530h1v1h-1zM394 64h1v1h-1zM953 137h1v1h-1zM49 300h1v1h-1zM1071 596h1v1h-1zM46 127h1v1h-1zM725 74h1v1h-1zM831 588h1v1h-1zM571 454h1v1h-1zM37 430h1v1h-1zM1229 400h1v1h-1zM972 132h1v1h-1zM410 54h1v1h-1zM965 591h1v1h-1zM37 433h1v1h-1zM777 194h1v1h-1zM261 425h1v1h-1zM226 81h1v1h-1zM496 650h1v1h-1zM67 92h1v1h-1zM100 75h1v1h-1zM448 113h1v1h-1zM476 429h1v1h-1zM889 614h1v1h-1zM768 440h1v1h-1zM187 681h1v1h-1zM297 652h1v1h-1zM536 94h1v1h-1zM322 358h1v1h-1zM766 641h1v1h-1zM887 526h1v1h-1zM1176 425h1v1h-1zM399 507h1v1h-1zM3 160h1v1h-1zM118 440h1v1h-1zM1041 475h1v1h-1zM290 350h1v1h-1zM925 420h1v1h-1zM373 439h1v1h-1zM1117 549h1v1h-1zM79 73h1v1h-1zM826 672h1v1h-1zM1177 103h1v1h-1zM717 170h1v1h-1zM455 21h1v1h-1zM73 547h1v1h-1zM576 391h1v1h-1zM1071 317h1v1h-1zM232 590h1v1h-1zM401 366h1v1h-1zM1273 507h1v1h-1zM697 351h1v1h-1zM266 676h1v1h-1zM1199 221h1v1h-1zM3 682h1v1h-1zM483 399h1v1h-1zM697 135h1v1h-1zM1131 105h1v1h-1zM1227 261h1v1h-1zM401 577h1v1h-1zM1144 553h1v1h-1zM426 318h1v1h-1zM120 513h1v1h-1zM593 672h1v1h-1zM374 359h1v1h-1zM1269 642h1v1h-1zM1249 521h1v1h-1zM431 668h1v1h-1zM71 175h1v1h-1zM934 260h1v1h-1zM131 67h1v1h-1zM809 467h1v1h-1zM935 428h1v1h-1zM373 172h1v1h-1zM1267 554h1v1h-1zM1081 235h1v1h-1zM976 557h1v1h-1zM1199 313h1v1h-1zM279 469h1v1h-1zM367 292h1v1h-1zM945 698h1v1h-1zM679 525h1v1h-1zM666 483h1v1h-1zM198 469h1v1h-1zM1074 356h1v1h-1zM484 282h1v1h-1zM1099 181h1v1h-1zM457 543h1v1h-1zM588 398h1v1h-1zM515 373h1v1h-1zM1126 680h1v1h-1zM1219 361h1v1h-1zM727 311h1v1h-1zM576 680h1v1h-1zM632 298h1v1h-1zM974 680h1v1h-1zM748 198h1v1h-1zM564 271h1v1h-1zM1165 604h1v1h-1zM211 321h1v1h-1zM709 691h1v1h-1zM953 306h1v1h-1zM652 208h1v1h-1zM359 405h1v1h-1zM821 461h1v1h-1zM500 310h1v1h-1zM287 106h1v1h-1zM444 139h1v1h-1zM789 551h1v1h-1zM1198 89h1v1h-1zM1217 318h1v1h-1zM145 332h1v1h-1zM1151 597h1v1h-1zM544 363h1v1h-1zM663 21h1v1h-1zM731 383h1v1h-1zM395 636h1v1h-1zM24 430h1v1h-1zM955 336h1v1h-1zM385 690h1v1h-1zM352 388h1v1h-1zM679 551h1v1h-1zM484 22h1v1h-1zM1180 90h1v1h-1zM678 146h1v1h-1zM13 639h1v1h-1zM338 464h1v1h-1zM832 256h1v1h-1zM467 586h1v1h-1zM279 120h1v1h-1zM773 530h1v1h-1zM838 312h1v1h-1zM543 277h1v1h-1zM167 483h1v1h-1zM1272 190h1v1h-1zM1277 79h1v1h-1zM959 46h1v1h-1zM1108 297h1v1h-1zM890 361h1v1h-1zM1068 25h1v1h-1zM449 266h1v1h-1zM919 495h1v1h-1zM516 648h1v1h-1zM79 263h1v1h-1zM422 269h1v1h-1zM1163 671h1v1h-1zM1137 140h1v1h-1zM396 549h1v1h-1zM592 662h1v1h-1zM241 454h1v1h-1zM927 365h1v1h-1zM426 668h1v1h-1zM717 394h1v1h-1zM1085 141h1v1h-1zM1164 696h1v1h-1zM621 138h1v1h-1zM579 578h1v1h-1zM296 439h1v1h-1zM726 224h1v1h-1zM643 359h1v1h-1zM1231 574h1v1h-1zM1179 146h1v1h-1zM720 486h1v1h-1zM336 89h1v1h-1zM802 209h1v1h-1zM699 106h1v1h-1zM36 485h1v1h-1zM717 357h1v1h-1zM1265 335h1v1h-1zM209 263h1v1h-1zM331 352h1v1h-1zM667 137h1v1h-1zM207 233h1v1h-1zM89 591h1v1h-1zM22 214h1v1h-1zM272 140h1v1h-1zM26 164h1v1h-1zM1228 95h1v1h-1zM401 274h1v1h-1zM797 119h1v1h-1zM991 462h1v1h-1zM1250 587h1v1h-1zM447 201h1v1h-1zM640 233h1v1h-1zM281 568h1v1h-1zM853 537h1v1h-1zM887 262h1v1h-1zM634 269h1v1h-1zM521 591h1v1h-1zM512 400h1v1h-1zM1007 46h1v1h-1zM205 614h1v1h-1zM266 689h1v1h-1zM582 396h1v1h-1zM1259 25h1v1h-1zM760 152h1v1h-1zM634 211h1v1h-1zM1166 616h1v1h-1zM569 219h1v1h-1zM238 592h1v1h-1zM697 321h1v1h-1zM471 234h1v1h-1zM888 518h1v1h-1zM1277 360h1v1h-1zM782 689h1v1h-1zM348 173h1v1h-1zM1242 93h1v1h-1zM413 416h1v1h-1zM1190 50h1v1h-1zM1258 402h1v1h-1zM1181 543h1v1h-1zM2 474h1v1h-1zM935 392h1v1h-1zM200 340h1v1h-1zM112 521h1v1h-1zM1139 681h1v1h-1zM770 248h1v1h-1zM908 591h1v1h-1zM99 342h1v1h-1zM1151 460h1v1h-1zM371 86h1v1h-1zM248 220h1v1h-1zM483 194h1v1h-1zM534 340h1v1h-1zM552 522h1v1h-1zM280 156h1v1h-1zM862 530h1v1h-1zM240 437h1v1h-1zM285 528h1v1h-1zM19 386h1v1h-1zM1136 685h1v1h-1zM67 50h1v1h-1zM1071 37h1v1h-1zM645 358h1v1h-1zM1240 36h1v1h-1zM143 358h1v1h-1zM101 414h1v1h-1zM815 388h1v1h-1zM814 562h1v1h-1zM945 39h1v1h-1zM262 207h1v1h-1zM94 637h1v1h-1zM20 94h1v1h-1zM573 369h1v1h-1zM974 203h1v1h-1zM241 389h1v1h-1zM879 488h1v1h-1zM1248 337h1v1h-1zM679 236h1v1h-1zM778 54h1v1h-1zM135 617h1v1h-1zM727 58h1v1h-1zM116 475h1v1h-1zM77 438h1v1h-1zM21 74h1v1h-1zM104 18h1v1h-1zM544 514h1v1h-1zM1243 175h1v1h-1zM463 244h1v1h-1zM1096 44h1v1h-1zM481 451h1v1h-1zM481 621h1v1h-1zM153 189h1v1h-1zM557 481h1v1h-1zM299 588h1v1h-1zM856 563h1v1h-1zM855 454h1v1h-1zM446 549h1v1h-1zM1053 306h1v1h-1zM756 682h1v1h-1zM234 157h1v1h-1zM884 119h1v1h-1zM270 223h1v1h-1zM164 203h1v1h-1zM226 698h1v1h-1zM216 18h1v1h-1zM996 231h1v1h-1zM605 406h1v1h-1zM264 324h1v1h-1zM604 384h1v1h-1zM461 515h1v1h-1zM359 138h1v1h-1zM247 654h1v1h-1zM782 245h1v1h-1zM217 536h1v1h-1zM1121 292h1v1h-1zM622 504h1v1h-1zM836 562h1v1h-1zM194 39h1v1h-1zM998 505h1v1h-1zM189 257h1v1h-1zM600 110h1v1h-1zM250 130h1v1h-1zM107 541h1v1h-1zM903 317h1v1h-1zM514 311h1v1h-1zM208 607h1v1h-1zM482 238h1v1h-1zM558 69h1v1h-1zM540 97h1v1h-1zM32 570h1v1h-1zM911 516h1v1h-1zM265 657h1v1h-1zM11 441h1v1h-1zM154 645h1v1h-1zM195 340h1v1h-1zM650 115h1v1h-1zM374 25h1v1h-1zM165 439h1v1h-1zM712 316h1v1h-1zM228 667h1v1h-1zM460 305h1v1h-1zM914 557h1v1h-1zM764 280h1v1h-1zM1242 342h1v1h-1zM477 531h1v1h-1zM904 606h1v1h-1zM872 558h1v1h-1zM230 672h1v1h-1zM299 53h1v1h-1zM553 211h1v1h-1zM179 51h1v1h-1zM1090 50h1v1h-1zM656 80h1v1h-1zM459 84h1v1h-1zM352 463h1v1h-1zM83 644h1v1h-1zM870 91h1v1h-1zM1034 333h1v1h-1zM1115 308h1v1h-1zM730 556h1v1h-1zM275 272h1v1h-1zM80 644h1v1h-1zM191 322h1v1h-1zM4 60h1v1h-1zM554 266h1v1h-1zM831 459h1v1h-1zM675 68h1v1h-1zM1001 665h1v1h-1zM583 334h1v1h-1zM728 235h1v1h-1zM971 248h1v1h-1zM1103 653h1v1h-1zM377 196h1v1h-1zM1005 450h1v1h-1zM18 376h1v1h-1zM793 209h1v1h-1zM726 410h1v1h-1zM489 96h1v1h-1zM519 28h1v1h-1zM963 154h1v1h-1zM515 122h1v1h-1zM1069 257h1v1h-1zM1051 649h1v1h-1zM562 255h1v1h-1zM191 87h1v1h-1zM697 616h1v1h-1zM518 235h1v1h-1zM1111 225h1v1h-1zM483 666h1v1h-1zM486 25h1v1h-1zM925 305h1v1h-1zM545 397h1v1h-1zM615 122h1v1h-1zM270 210h1v1h-1zM157 363h1v1h-1zM28 579h1v1h-1zM1119 45h1v1h-1zM577 335h1v1h-1zM169 366h1v1h-1zM1085 553h1v1h-1zM911 616h1v1h-1zM1234 232h1v1h-1zM377 503h1v1h-1zM1078 541h1v1h-1zM279 505h1v1h-1zM1218 76h1v1h-1zM644 515h1v1h-1zM565 492h1v1h-1zM312 262h1v1h-1zM380 681h1v1h-1zM1009 140h1v1h-1zM1261 237h1v1h-1zM1259 187h1v1h-1zM1158 572h1v1h-1zM692 439h1v1h-1zM1005 694h1v1h-1zM421 139h1v1h-1zM946 296h1v1h-1zM1075 197h1v1h-1zM208 131h1v1h-1zM234 75h1v1h-1zM909 605h1v1h-1zM765 593h1v1h-1zM1181 640h1v1h-1zM5 211h1v1h-1zM395 468h1v1h-1zM583 313h1v1h-1zM82 184h1v1h-1zM657 213h1v1h-1zM1059 605h1v1h-1zM126 442h1v1h-1zM853 655h1v1h-1zM226 74h1v1h-1zM655 101h1v1h-1zM547 198h1v1h-1zM1028 661h1v1h-1zM867 192h1v1h-1zM1149 337h1v1h-1zM62 412h1v1h-1zM1243 65h1v1h-1zM144 183h1v1h-1zM1013 648h1v1h-1zM1111 529h1v1h-1zM1028 338h1v1h-1zM836 601h1v1h-1zM792 129h1v1h-1zM729 487h1v1h-1zM863 219h1v1h-1zM931 594h1v1h-1zM686 94h1v1h-1zM811 429h1v1h-1zM297 327h1v1h-1zM1218 185h1v1h-1zM355 544h1v1h-1zM428 472h1v1h-1zM275 442h1v1h-1zM980 255h1v1h-1zM875 349h1v1h-1zM73 87h1v1h-1zM764 311h1v1h-1zM378 354h1v1h-1zM940 44h1v1h-1zM1239 212h1v1h-1zM858 33h1v1h-1zM757 308h1v1h-1zM706 382h1v1h-1zM411 289h1v1h-1zM774 356h1v1h-1zM843 173h1v1h-1zM97 683h1v1h-1zM102 106h1v1h-1zM670 235h1v1h-1zM320 455h1v1h-1zM808 109h1v1h-1zM1202 432h1v1h-1zM764 468h1v1h-1zM1232 321h1v1h-1zM569 27h1v1h-1zM1 108h1v1h-1zM894 162h1v1h-1zM80 685h1v1h-1zM743 368h1v1h-1zM892 165h1v1h-1zM1194 352h1v1h-1zM929 120h1v1h-1zM685 616h1v1h-1zM876 543h1v1h-1zM787 581h1v1h-1zM138 195h1v1h-1zM370 350h1v1h-1zM1050 645h1v1h-1zM1192 227h1v1h-1zM996 589h1v1h-1zM1169 271h1v1h-1zM1135 554h1v1h-1zM992 94h1v1h-1zM709 482h1v1h-1zM312 628h1v1h-1zM331 18h1v1h-1zM1152 499h1v1h-1zM1278 70h1v1h-1zM378 229h1v1h-1zM1153 412h1v1h-1zM851 325h1v1h-1zM777 699h1v1h-1zM1058 545h1v1h-1zM92 551h1v1h-1zM539 525h1v1h-1zM313 361h1v1h-1zM427 121h1v1h-1zM750 23h1v1h-1zM191 385h1v1h-1zM401 389h1v1h-1zM774 24h1v1h-1zM847 614h1v1h-1zM1183 135h1v1h-1zM586 40h1v1h-1zM208 489h1v1h-1zM18 614h1v1h-1zM357 143h1v1h-1zM392 105h1v1h-1zM580 388h1v1h-1zM982 277h1v1h-1zM593 142h1v1h-1zM369 245h1v1h-1zM505 545h1v1h-1zM728 242h1v1h-1zM1124 440h1v1h-1zM594 74h1v1h-1zM253 67h1v1h-1zM455 394h1v1h-1zM780 340h1v1h-1zM851 291h1v1h-1zM581 551h1v1h-1zM885 272h1v1h-1zM7 633h1v1h-1zM725 208h1v1h-1zM682 159h1v1h-1zM60 228h1v1h-1zM250 694h1v1h-1zM527 578h1v1h-1zM481 577h1v1h-1zM278 628h1v1h-1zM55 57h1v1h-1zM270 428h1v1h-1zM1011 503h1v1h-1zM363 520h1v1h-1zM228 568h1v1h-1zM762 551h1v1h-1zM1216 278h1v1h-1zM1107 136h1v1h-1zM484 197h1v1h-1zM27 115h1v1h-1zM742 663h1v1h-1zM416 318h1v1h-1zM62 646h1v1h-1zM624 317h1v1h-1zM504 510h1v1h-1zM161 37h1v1h-1zM1015 351h1v1h-1zM1005 564h1v1h-1zM1015 28h1v1h-1zM717 223h1v1h-1zM627 603h1v1h-1zM1145 648h1v1h-1zM12 367h1v1h-1zM517 542h1v1h-1zM656 497h1v1h-1zM499 344h1v1h-1zM90 418h1v1h-1zM1166 420h1v1h-1zM772 264h1v1h-1zM872 286h1v1h-1zM523 123h1v1h-1zM907 494h1v1h-1zM33 275h1v1h-1zM958 47h1v1h-1zM362 348h1v1h-1zM738 51h1v1h-1zM1272 454h1v1h-1zM621 275h1v1h-1zM1224 333h1v1h-1zM28 235h1v1h-1zM373 450h1v1h-1zM1243 607h1v1h-1zM1179 645h1v1h-1zM519 482h1v1h-1zM33 305h1v1h-1zM222 260h1v1h-1zM296 545h1v1h-1zM953 345h1v1h-1zM532 404h1v1h-1zM305 266h1v1h-1zM363 571h1v1h-1zM1195 492h1v1h-1zM233 666h1v1h-1zM814 283h1v1h-1zM1260 262h1v1h-1zM474 455h1v1h-1zM1268 586h1v1h-1zM152 670h1v1h-1zM903 665h1v1h-1zM180 538h1v1h-1zM228 325h1v1h-1zM1154 345h1v1h-1zM1275 667h1v1h-1zM1032 448h1v1h-1zM842 391h1v1h-1zM406 248h1v1h-1zM177 610h1v1h-1zM983 456h1v1h-1zM48 370h1v1h-1zM547 127h1v1h-1zM1022 129h1v1h-1zM1224 617h1v1h-1zM432 39h1v1h-1zM370 621h1v1h-1zM1116 106h1v1h-1zM608 555h1v1h-1zM251 56h1v1h-1zM516 473h1v1h-1zM965 289h1v1h-1zM818 570h1v1h-1zM475 93h1v1h-1zM955 344h1v1h-1zM753 486h1v1h-1z"/>
<path fill="#c8d4f0" fill-opacity="0.75" d="M579 401h1v1h-1zM54 692h1v1h-1zM112 245h1v1h-1zM272 202h1v1h-1zM822 85h1v1h-1zM243 525h1v1h-1zM45 28h1v1h-1zM699 523h1v1h-1zM636 439h1v1h-1zM838 571h1v1h-1zM581 446h1v1h-1zM273 635h1v1h-1zM530 674h1v1h-1zM555 577h1v1h-1zM1181 166h1v1h-1zM898 540h1v1h-1zM782 56h1v1h-1zM64 696h1v1h-1zM679 702h1v1h-1zM472 466h1v1h-1zM1176 663h1v1h-1zM407 291h1v1h-1zM333 627h1v1h-1zM438 393h1v1h-1zM505 334h1v1h-1zM521 66h1v1h-1zM513 498h1v1h-1zM1069 152h1v1h-1zM593 101h1v1h-1zM230 695h1v1h-1zM672 313h1v1h-1zM88 643h1v1h-1zM638 659h1v1h-1zM220 621h1v1h-1zM929 231h1v1h-1zM819 78h1v1h-1zM627 540h1v1h-1zM309 334h1v1h-1zM466 248h1v1h-1zM336 286h1v1h-1zM980 514h1v1h-1zM601 439h1v1h-1zM464 412h1v1h-1zM18 419h1v1h-1zM366 519h1v1h-1zM1202 611h1v1h-1zM13 161h1v1h-1zM1262 85h1v1h-1zM235 262h1v1h-1zM1110 103h1v1h-1zM1021 368h1v1h-1zM987 394h1v1h-1zM585 364h1v1h-1zM775 684h1v1h-1zM832 498h1v1h-1zM840 166h1v1h-1zM334 93h1v1h-1zM870 75h1v1h-1zM800 396h1v1h-1zM818 31h1v1h-1zM152 229h1v1h-1zM716 687h1v1h-1zM746 635h1v1h-1zM882 266h1v1h-1zM684 470h1v1h-1zM1216 92h1v1h-1zM841 65h1v1h-1zM38 409h1v1h-1zM623 400h1v1h-1zM430 499h1v1h-1zM1249 670h1v1h-1zM784 438h1v1h-1zM111 373h1v1h-1zM456 643h1v1h-1zM263 620h1v1h-1zM1192 251h1v1h-1zM181 508h1v1h-1zM1130 516h1v1h-1zM976 378h1v1h-1zM396 539h1v1h-1zM1170 177h1v1h-1zM747 124h1v1h-1zM546 398h1v1h-1zM1028 689h1v1h-1zM1219 442h1v1h-1zM711 457h1v1h-1zM416 516h1v1h-1zM1269 408h1v1h-1zM398 616h1v1h-1zM793 119h1v1h-1zM1127 698h1v1h-1zM1268 68h1v1h-1zM209 342h1v1h-1zM1081 498h1v1h-1zM62 35h1v1h-1zM1083 430h1v1h-1zM1004 497h1v1h-1zM980 94h1v1h-1zM739 628h1v1h-1zM1074 467h1v1h-1zM925 605h1v1h-1zM1029 287h1v1h-1zM774 51h1v1h-1zM602 223h1v1h-1zM410 514h1v1h-1zM179 392h1v1h-1zM1245 264h1v1h-1zM60 126h1v1h-1zM203 584h1v1h-1zM211 175h1v1h-1zM335 574h1v1h-1zM769 676h1v1h-1zM374 304h1v1h-1zM936 58h1v1h-1zM557 426h1v1h-1zM337 86h1v1h-1zM1229 670h1v1h-1zM69 485h1v1h-1zM1228 575h1v1h-1zM1091 547h1v1h-1zM774 109h1v1h-1zM653 201h1v1h-1zM313 123h1v1h-1zM66 270h1v1h-1zM1128 284h1v1h-1zM218 516h1v1h-1zM552 597h1v1h-1zM715 297h1v1h-1zM315 439h1v1h-1zM563 626h1v1h-1zM921 143h1v1h-1zM1257 357h1v1h-1zM8 688h1v1h-1zM767 238h1v1h-1zM750 533h1v1h-1zM188 483h1v1h-1zM718 211h1v1h-1zM555 577h1v1h-1zM32 640h1v1h-1zM88 221h1v1h-1zM706 428h1v1h-1zM869 48h1v1h-1zM1082 184h1v1h-1zM1076 645h1v1h-1zM95 660h1v1h-1zM213 344h1v1h-1zM101 470h1v1h-1zM221 236h1v1h-1zM1093 684h1v1h-1zM1023 381h1v1h-1zM382 22h1v1h-1zM829 33h1v1h-1zM553 215h1v1h-1zM93 330h1v1h-1zM110 619h1v1h-1zM704 383h1v1h-1zM143 490h1v1h-1zM297 579h1v1h-1zM1182 79h1v1h-1zM376 227h1v1h-1zM802 525h1v1h-1zM439 354h1v1h-1zM786 645h1v1h-1zM455 688h1v1h-1zM960 71h1v1h-1zM648 298h1v1h-1zM488 686h1v1h-1zM128 270h1v1h-1zM37 264h1v1h-1zM480 208h1v1h-1zM156 670h1v1h-1zM831 679h1v1h-1zM1199 635h1v1h-1zM541 410h1v1h-1zM897 394h1v1h-1zM1084 236h1v1h-1zM577 346h1v1h-1zM830 423h1v1h-1zM709 201h1v1h-1zM646 450h1v1h-1zM265 534h1v1h-1zM1127 61h1v1h-1zM439 107h1v1h-1zM38 178h1v1h-1zM935 604h1v1h-1zM766 211h1v1h-1zM850 81h1v1h-1zM1055 522h1v1h-1zM919 18h1v1h-1zM783 58h1v1h-1zM539 628h1v1h-1zM870 96h1v1h-1zM1025 387h1v1h-1zM1194 448h1v1h-1zM53 350h1v1h-1zM910 629h1v1h-1zM225 264h1v1h-1zM736 146h1v1h-1zM873 258h1v1h-1zM331 701h1v1h-1zM723 679h1v1h-1zM893 185h1v1h-1zM609 137h1v1h-1zM864 36h1v1h-1zM461 25h1v1h-1zM561 422h1v1h-1zM905 462h1v1h-1zM236 469h1v1h-1zM1072 109h1v1h-1zM142 64h1v1h-1zM70 461h1v1h-1zM1040 529h1v1h-1zM605 667h1v1h-1zM289 653h1v1h-1zM1143 257h1v1h-1zM846 24h1v1h-1zM389 341h1v1h-1zM840 527h1v1h-1zM722 190h1v1h-1zM208 500h1v1h-1zM88 403h1v1h-1zM371 517h1v1h-1zM278 182h1v1h-1zM743 564h1v1h-1zM844 186h1v1h-1zM1142 18h1v1h-1zM221 574h1v1h-1zM734 474h1v1h-1zM725 252h1v1h-1zM951 361h1v1h-1zM490 693h1v1h-1zM1167 576h1v1h-1zM528 495h1v1h-1zM831 692h1v1h-1zM623 547h1v1h-1zM977 461h1v1h-1zM815 492h1v1h-1zM1262 372h1v1h-1zM195 191h1v1h-1zM1090 229h1v1h-1zM1049 144h1v1h-1zM31 156h1v1h-1zM1242 253h1v1h-1zM98 271h1v1h-1zM777 191h1v1h-1zM1158 476h1v1h-1zM271 369h1v1h-1zM54 259h1v1h-1zM294 537h1v1h-1zM101 268h1v1h-1zM658 647h1v1h-1zM12 422h1v1h-1zM343 368h1v1h-1zM211 257h1v1h-1zM971 301h1v1h-1zM453 58h1v1h-1zM185 570h1v1h-1zM48 687h1v1h-1zM1068 298h1v1h-1zM1224 225h1v1h-1zM663 158h1v1h-1zM902 256h1v1h-1zM100 37h1v1h-1zM442 280h1v1h-1zM548 119h1v1h-1zM265 501h1v1h-1zM1007 606h1v1h-1zM1279 58h1v1h-1zM1016 688h1v1h-1zM1064 654h1v1h-1zM1172 481h1v1h-1zM702 586h1v1h-1zM976 428h1v1h-1zM928 655h1v1h-1zM141 469h1v1h-1zM680 191h1v1h-1zM96 305h1v1h-1zM364 444h1v1h-1zM796 429h1v1h-1zM165 313h1v1h-1zM877 700h1v1h-1zM63 116h1v1h-1zM277 462h1v1h-1zM1220 32h1v1h-1zM725 220h1v1h-1zM1239 163h1v1h-1zM369 308h1v1h-1zM625 513h1v1h-1zM703 532h1v1h-1zM591 147h1v1h-1zM507 46h1v1h-1zM991 106h1v1h-1zM241 567h1v1h-1zM1095 421h1v1h-1zM487 676h1v1h-1zM728 22h1v1h-1zM1207 701h1v1h-1zM143 385h1v1h-1zM217 564h1v1h-1zM315 619h1v1h-1zM299 344h1v1h-1zM793 384h1v1h-1zM436 562h1v1h-1zM657 151h1v1h-1zM569 565h1v1h-1zM49 328h1v1h-1zM821 66h1v1h-1zM608 654h1v1h-1zM429 675h1v1h-1zM139 459h1v1h-1zM1099 640h1v1h-1zM1161 182h1v1h-1zM538 525h1v1h-1zM15 534h1v1h-1zM786 185h1v1h-1zM838 143h1v1h-1zM974 212h1v1h-1zM324 79h1v1h-1zM1278 241h1v1h-1zM909 676h1v1h-1zM657 631h1v1h-1zM1195 232h1v1h-1zM333 330h1v1h-1zM1252 195h1v1h-1zM46 693h1v1h-1zM1140 426h1v1h-1zM1268 409h1v1h-1zM337 272h1v1h-1zM864 309h1v1h-1zM1224 677h1v1h-1zM1108 645h1v1h-1zM479 90h1v1h-1zM599 88h1v1h-1zM116 411h1v1h-1zM564 616h1v1h-1zM589 694h1v1h-1zM986 90h1v1h-1zM1158 266h1v1h-1zM580 434h1v1h-1zM675 424h1v1h-1zM920 216h1v1h-1zM655 548h1v1h-1zM129 622h1v1h-1zM401 399h1v1h-1zM533 677h1v1h-1zM623 33h1v1h-1zM728 458h1v1h-1zM380 305h1v1h-1zM77 115h1v1h-1zM222 541h1v1h-1zM1144 140h1v1h-1zM835 267h1v1h-1zM464 528h1v1h-1zM74 422h1v1h-1zM1271 264h1v1h-1zM1059 297h1v1h-1zM809 411h1v1h-1zM47 432h1v1h-1zM150 294h1v1h-1zM674 433h1v1h-1zM1128 24h1v1h-1zM342 259h1v1h-1zM111 251h1v1h-1zM998 54h1v1h-1zM548 93h1v1h-1zM658 326h1v1h-1zM1209 426h1v1h-1zM379 252h1v1h-1zM500 391h1v1h-1zM776 403h1v1h-1zM510 541h1v1h-1zM295 506h1v1h-1zM417 419h1v1h-1zM1219 390h1v1h-1zM795 165h1v1h-1zM174 446h1v1h-1zM872 295h1v1h-1zM965 490h1v1h-1zM684 537h1v1h-1zM497 59h1v1h-1z"/>
<path d="M637 224 Q720 240 766 299" fill="none" stroke="#9aaad4" stroke-opacity="0.28" stroke-width="1"/>
<path d="M636 141 Q670 143 701 149" fill="none" stroke="#9aaad4" stroke-opacity="0.28" stroke-width="1"/>
<path d="M702 275 C740 300 762 360 726 418" fill="none" stroke="#9aaad4" stroke-opacity="0.28" stroke-width="1"/>
<path d="M680 325 Q700 340 696 363" fill="none" stroke="#9aaad4" stroke-opacity="0.28" stroke-width="1"/>
<path d="M677 359 Q675 378 662 388" fill="none" stroke="#9aaad4" stroke-opacity="0.28" stroke-width="1"/>
<path d="M801 194 Q812 200 825 217" fill="none" stroke="#9aaad4" stroke-opacity="0.28" stroke-width="1"/>
<path d="M803 347 Q805 385 793 417" fill="none" stroke="#9aaad4" stroke-opacity="0.28" stroke-width="1"/>
<path d="M599 425 Q620 430 638 433" fill="none" stroke="#9aaad4" stroke-opacity="0.28" stroke-width="1"/>
<path d="M455 468 Q500 540 603 568 Q640 576 662 576" fill="none" stroke="#9aaad4" stroke-opacity="0.28" stroke-width="1"/>
<path d="M513 426 Q525 448 546 464" fill="none" stroke="#9aaad4" stroke-opacity="0.28" stroke-width="1"/>
<path d="M625 460 Q640 458 662 458" fill="none" stroke="#9aaad4" stroke-opacity="0.28" stroke-width="1"/>
<path d="M610 550 Q635 552 662 552" fill="none" stroke="#9aaad4" stroke-opacity="0.28" stroke-width="1"/>
<path d="M85 151 Q52 280 52 360 Q55 480 90 566" fill="none" stroke="#9aaad4" stroke-opacity="0.16" stroke-width="1"/>
<path d="M1087 399 Q1084 420 1078 450" fill="none" stroke="#9aaad4" stroke-opacity="0.28" stroke-width="1"/>
<circle cx="800" cy="194" r="8.1" fill="url(#glow)" opacity=".8"/>
<ellipse cx="800" cy="194" rx="13.5" ry="1.5" fill="url(#glow)"/>
<ellipse cx="800" cy="194" rx="1.5" ry="12.2" fill="url(#glow)"/>
<circle cx="800" cy="194" r="2.0" fill="#fff"/>
<circle cx="779" cy="202" r="5.4" fill="url(#glow)" opacity=".8"/>
<ellipse cx="779" cy="202" rx="9.0" ry="1.0" fill="url(#glow)"/>
<ellipse cx="779" cy="202" rx="1.0" ry="8.1" fill="url(#glow)"/>
<circle cx="779" cy="202" r="1.3" fill="#fff"/>
<circle cx="799" cy="275" r="3.6" fill="url(#glow)" opacity=".8"/>
<ellipse cx="799" cy="275" rx="6.0" ry="1.0" fill="url(#glow)"/>
<ellipse cx="799" cy="275" rx="1.0" ry="5.4" fill="url(#glow)"/>
<circle cx="799" cy="275" r="1.0" fill="#fff"/>
<circle cx="730" cy="290" r="3.6" fill="url(#glow)" opacity=".8"/>
<ellipse cx="730" cy="290" rx="6.0" ry="1.0" fill="url(#glow)"/>
<ellipse cx="730" cy="290" rx="1.0" ry="5.4" fill="url(#glow)"/>
<circle cx="730" cy="290" r="1.0" fill="#fff"/>
<circle cx="680" cy="325" r="8.1" fill="url(#glow)" opacity=".8"/>
<ellipse cx="680" cy="325" rx="13.5" ry="1.5" fill="url(#glow)"/>
<ellipse cx="680" cy="325" rx="1.5" ry="12.2" fill="url(#glow)"/>
<circle cx="680" cy="325" r="2.0" fill="#fff"/>
<circle cx="803" cy="347" r="5.4" fill="url(#glow)" opacity=".8"/>
<ellipse cx="803" cy="347" rx="9.0" ry="1.0" fill="url(#glow)"/>
<ellipse cx="803" cy="347" rx="1.0" ry="8.1" fill="url(#glow)"/>
<circle cx="803" cy="347" r="1.3" fill="#fff"/>
<circle cx="662" cy="388" r="7.2" fill="url(#glow)" opacity=".8"/>
<ellipse cx="662" cy="388" rx="12.0" ry="1.3" fill="url(#glow)"/>
<ellipse cx="662" cy="388" rx="1.3" ry="10.8" fill="url(#glow)"/>
<circle cx="662" cy="388" r="1.8" fill="#fff"/>
<circle cx="667" cy="390" r="4.5" fill="url(#glow)" opacity=".8"/>
<ellipse cx="667" cy="390" rx="7.5" ry="1.0" fill="url(#glow)"/>
<ellipse cx="667" cy="390" rx="1.0" ry="6.8" fill="url(#glow)"/>
<circle cx="667" cy="390" r="1.1" fill="#fff"/>
<circle cx="803" cy="392" r="3.6" fill="url(#glow)" opacity=".8"/>
<ellipse cx="803" cy="392" rx="6.0" ry="1.0" fill="url(#glow)"/>
<ellipse cx="803" cy="392" rx="1.0" ry="5.4" fill="url(#glow)"/>
<circle cx="803" cy="392" r="1.0" fill="#fff"/>
<circle cx="735" cy="392" r="2.7" fill="url(#glow)" opacity=".8"/>
<ellipse cx="735" cy="392" rx="4.5" ry="1.0" fill="url(#glow)"/>
<ellipse cx="735" cy="392" rx="1.0" ry="4.0" fill="url(#glow)"/>
<circle cx="735" cy="392" r="1.0" fill="#fff"/>
<circle cx="455" cy="468" r="7.2" fill="url(#glow)" opacity=".8"/>
<ellipse cx="455" cy="468" rx="12.0" ry="1.3" fill="url(#glow)"/>
<ellipse cx="455" cy="468" rx="1.3" ry="10.8" fill="url(#glow)"/>
<circle cx="455" cy="468" r="1.8" fill="#fff"/>
<circle cx="547" cy="467" r="8.1" fill="url(#glow)" opacity=".8"/>
<ellipse cx="547" cy="467" rx="13.5" ry="1.5" fill="url(#glow)"/>
<ellipse cx="547" cy="467" rx="1.5" ry="12.2" fill="url(#glow)"/>
<circle cx="547" cy="467" r="2.0" fill="#fff"/>
<circle cx="622" cy="463" r="5.4" fill="url(#glow)" opacity=".8"/>
<ellipse cx="622" cy="463" rx="9.0" ry="1.0" fill="url(#glow)"/>
<ellipse cx="622" cy="463" rx="1.0" ry="8.1" fill="url(#glow)"/>
<circle cx="622" cy="463" r="1.3" fill="#fff"/>
<circle cx="634" cy="470" r="3.6" fill="url(#glow)" opacity=".8"/>
<ellipse cx="634" cy="470" rx="6.0" ry="1.0" fill="url(#glow)"/>
<ellipse cx="634" cy="470" rx="1.0" ry="5.4" fill="url(#glow)"/>
<circle cx="634" cy="470" r="1.0" fill="#fff"/>
<circle cx="1123" cy="530" r="5.4" fill="url(#glow)" opacity=".8"/>
<ellipse cx="1123" cy="530" rx="9.0" ry="1.0" fill="url(#glow)"/>
<ellipse cx="1123" cy="530" rx="1.0" ry="8.1" fill="url(#glow)"/>
<circle cx="1123" cy="530" r="1.3" fill="#fff"/>
<circle cx="1251" cy="662" r="3.6" fill="url(#glow)" opacity=".8"/>
<ellipse cx="1251" cy="662" rx="6.0" ry="1.0" fill="url(#glow)"/>
<ellipse cx="1251" cy="662" rx="1.0" ry="5.4" fill="url(#glow)"/>
<circle cx="1251" cy="662" r="1.0" fill="#fff"/>
</svg>
<!-- top panel -->
<div class="panel" style="top:0;background:linear-gradient(#dedede,#d6d6d6 60%,#cfcfcf)"></div>
<svg class="a" style="left:3px;top:1px" width="15" height="14" viewBox="0 0 15 14">
 <path d="M7.2 .3 C11 .3 14 3.3 14 7 C14 10.8 11 13.6 7.2 13.6 L2.3 13.6 C1.1 13.6 .3 12.8 .3 11.6 L.3 7 C.3 3.3 3.4 .3 7.2 .3Z" fill="#294172"/>
 <circle cx="9.4" cy="4.7" r="2.4" fill="none" stroke="#4a7fcf" stroke-width="1.1"/>
 <circle cx="4.6" cy="9.2" r="2.4" fill="none" stroke="#4a7fcf" stroke-width="1.1"/>
 <path d="M10.6 2.6 C8.4 2 7 3.2 7 5 L7 9.4 C7 11.2 5.6 12 3.6 11.6 M4.5 7.1 L10.2 7.1" fill="none" stroke="#fff" stroke-width="1.5" stroke-linecap="round"/>
</svg>
<div class="ptxt" style="left:21px;top:3px;color:#262626">Applications</div>
<div class="ptxt" style="left:80px;top:3px;color:#262626">Places</div>
<div class="ptxt" style="left:113px;top:3px;color:#262626">System</div>
<!-- launchers -->
<svg class="a" style="left:150px;top:1px" width="12" height="14" viewBox="0 0 12 14">
 <defs><linearGradient id="cab" x1="0" y1="0" x2="0" y2="1"><stop offset="0" stop-color="#f4f4f4"/><stop offset="1" stop-color="#c4c4c4"/></linearGradient></defs>
 <rect x=".5" y=".5" width="11" height="13" rx="1" fill="url(#cab)" stroke="#8e8e8e"/>
 <rect x="2" y="2" width="8" height="4.5" fill="none" stroke="#a8a8a8" stroke-width=".7"/>
 <rect x="2" y="7.5" width="8" height="4.5" fill="none" stroke="#a8a8a8" stroke-width=".7"/>
 <rect x="4.5" y="3.5" width="3" height="1" fill="#7a7a7a"/><rect x="4.5" y="9" width="3" height="1" fill="#7a7a7a"/>
</svg>
<svg class="a" style="left:164px;top:1px" width="16" height="14" viewBox="0 0 16 14">
 <rect x=".5" y=".5" width="15" height="13" rx="1.5" fill="#b8b8b8" stroke="#6a6a6a"/>
 <rect x="2" y="2" width="12" height="10" fill="#2c302e"/>
 <path d="M3.5 4 L5 5 L3.5 6" fill="none" stroke="#d8d8d8" stroke-width=".8"/><rect x="5.5" y="6" width="2" height=".8" fill="#d8d8d8"/>
</svg>
<svg class="a" style="left:181px;top:1px" width="14" height="14" viewBox="0 0 14 14">
 <circle cx="7.3" cy="6.8" r="5.6" fill="#2c5fb8"/><circle cx="8" cy="5.8" r="3" fill="#4f8ae0" opacity=".8"/>
 <path d="M2.2 3.5 C1 6 1.3 9.5 3.8 11.8 C6.5 14 11 13.6 13 10.5 C11 12 7.5 12.2 5.3 10.3 C3.5 8.6 3.6 6.2 4.8 4.8 C4 6.5 5 8.3 6.5 8.8 C5.2 7.6 5.6 5.2 7.2 4.5 C6 3.8 4.8 3.2 5.5 1.2 C4 1.8 2.8 2.6 2.2 3.5Z" fill="#e8620c"/>
 <path d="M2.4 4 C1.6 6 1.8 8.5 3 10 C2.5 8 2.8 5.8 4 4.5Z" fill="#ffb02e"/>
</svg>
<svg class="a" style="left:197px;top:1px" width="14" height="14" viewBox="0 0 14 14">
 <circle cx="7" cy="6.5" r="6" fill="#8fb8e0" stroke="#5c7fa8" stroke-width=".7"/>
 <path d="M7 3 C5 2 3 3 3 4.5 C4.5 3.8 6 4 7 5 C8 4 9.5 3.8 11 4.5 C11 3 9 2 7 3Z" fill="#2f7a2a"/>
 <path d="M6.6 5 L7.4 5 L7.8 10 L6.2 10Z" fill="#8a5a2a"/>
 <rect x="3" y="9" width="8" height="4.5" fill="#f4f4f4" stroke="#999" stroke-width=".5"/><path d="M3 9 L7 11.5 L11 9" fill="none" stroke="#bbb" stroke-width=".5"/>
</svg>
<!-- tray -->
<div class="a" style="left:1120px;top:4px;width:2px;height:8px;border-left:1px dotted #b5b5b5"></div>
<svg class="a" style="left:1126px;top:1px" width="15" height="14" viewBox="0 0 15 14">
 <path d="M1 5 L4 5 L7.5 2 L7.5 12 L4 9 L1 9Z" fill="#8a8a8a" stroke="#555" stroke-width=".6"/>
 <path d="M9.5 4.5 Q11 7 9.5 9.5 M11.3 3 Q13.5 7 11.3 11 M13 1.5 Q15.5 7 13 12.5" fill="none" stroke="#3f6cc0" stroke-width="1"/>
</svg>
<svg class="a" style="left:1142px;top:1px" width="16" height="14" viewBox="0 0 16 14">
 <rect x="5.5" y=".5" width="10" height="7.5" fill="#e8e8e8" stroke="#666" stroke-width=".7"/><rect x="6.8" y="1.8" width="7.4" height="5" fill="#3566b0"/>
 <rect x=".5" y="4" width="10" height="7.5" fill="#e8e8e8" stroke="#666" stroke-width=".7"/><rect x="1.8" y="5.3" width="7.4" height="5" fill="#3566b0"/>
 <rect x="2" y="12" width="7" height="1.8" fill="#ddd" stroke="#777" stroke-width=".5"/>
</svg>
<div class="a" style="left:1163px;top:4px;width:9px;height:9px;border-radius:50%;background:radial-gradient(circle at 40% 40%,#fff38a,#f2dc3a);box-shadow:0 0 0 .5px #d8c850"></div>
<div class="ptxt" style="left:1174px;top:2px;color:#2c2c2c">13 °C</div>
<div class="ptxt" style="left:1205px;top:2px;color:#2c2c2c;letter-spacing:-.2px">Fr.  8. Apr., 15:48</div>

<!-- bottom panel -->
<div class="panel" style="top:704px;background:linear-gradient(#e0e0e0,#d6d6d6 40%,#d2d2d2)"></div>
<div class="a" style="left:3px;top:706px;width:10px;height:12px;background:linear-gradient(#d8d8b8,#a8a880);border-radius:2px;border:1px solid #8a8a6a"></div>
<div class="a" style="left:18px;top:708px;width:2px;height:8px;border-left:1px dotted #b0b0b0"></div>
<div class="a" style="left:28px;top:706px;width:11px;height:10px;background:#a8a8a8;border:1px solid #8c8c8c"></div>
<div class="ptxt" style="left:43px;top:707px;color:#3a3a3a">[Mate Terminal]</div>
<div class="a" style="left:163px;top:706px;width:10px;height:10px;background:#e8e8e8;border:1px solid #b8b8b8;border-radius:2px"></div>
<div class="ptxt" style="left:178px;top:707px;color:#3a3a3a">[Control Center]</div>
<svg class="a" style="left:297px;top:706px" width="12" height="12" viewBox="0 0 12 12"><path d="M6 0.8 L11.2 6 L6 11.2 L0.8 6Z" fill="#8fa6d8" stroke="#4a5f9a" stroke-width="1"/></svg>
<div class="ptxt" style="left:314px;top:707px;color:#333">Preferred Applications</div>
<div class="a" style="left:428px;top:705px;width:132px;height:15px;background:linear-gradient(#c6c6c6,#cccccc);border:1px solid #b4b4b4;border-bottom:none;border-radius:2px 2px 0 0"></div>
<svg class="a" style="left:432px;top:706px" width="12" height="12" viewBox="0 0 12 12"><rect x=".5" y=".5" width="11" height="11" fill="#5a8ed0" stroke="#345f9a"/><path d="M2 6 L5 3.5 L5 5 L10 5 L10 7 L5 7 L5 8.5Z" fill="#fff"/></svg>
<div class="ptxt" style="left:449px;top:707px;color:#333">Startup Applications Pr...</div>
<svg class="a" style="left:566px;top:705px" width="12" height="13" viewBox="0 0 12 13"><path d="M1 12 L1 2 L3 1 L3 12Z" fill="#f3d54a"/><path d="M4 12 L4 3 L6 2 L6 12Z" fill="#e2563a"/><path d="M7 12 L8 4 L11 10 L10 12Z" fill="#9a6ad0"/><rect x=".5" y="11" width="11" height="1.5" fill="#888"/></svg>
<div class="ptxt" style="left:583px;top:707px;color:#333;letter-spacing:-.25px">Appearance Preferences</div>
<!-- workspace switcher -->
<div class="a" style="left:1183px;top:705px;width:24px;height:14px;background:#3f6ea6;border:1px solid #2d5586"></div>
<div class="a" style="left:1185px;top:707px;width:11px;height:7px;background:#7fb0ea;border:1px solid #dce9f8"></div>
<div class="a" style="left:1198px;top:707px;width:7px;height:6px;background:#7fb0ea;border:1px solid #dce9f8"></div>
<div class="a" style="left:1187px;top:715px;width:4px;height:3px;background:#7fb0ea;border:1px solid #dce9f8"></div>
<div class="a" style="left:1197px;top:714px;width:6px;height:4px;background:#9cc2ee;border:1px solid #dce9f8"></div>
<div class="a" style="left:1208px;top:705px;width:22px;height:14px;background:#9a9a9a"></div>
<div class="a" style="left:1232px;top:705px;width:22px;height:14px;background:#9a9a9a"></div>
<div class="a" style="left:1256px;top:705px;width:24px;height:14px;background:#9a9a9a"></div>
<!-- ===== desktop icons ===== -->
<svg class="a" style="left:42px;top:30px" width="34" height="33" viewBox="0 0 34 33">
<defs><linearGradient id="scr" x1="0" y1="0" x2="1" y2="1"><stop offset="0" stop-color="#3a78d0"/><stop offset=".5" stop-color="#2a62b8"/><stop offset="1" stop-color="#1a4a98"/></linearGradient></defs>
<rect x=".5" y=".5" width="32" height="20" rx="1" fill="#e8e8e8" stroke="#9a9a9a"/>
<rect x="2.5" y="2.5" width="28" height="15" fill="url(#scr)"/>
<path d="M12 2.5 L20 2.5 L14 17.5 L8 17.5Z" fill="#fff" opacity=".18"/>
<path d="M13 21 L20 21 L21 24 L12 24Z" fill="#d8d8d8"/>
<rect x="10" y="23.5" width="13" height="2" fill="#f0f0f0" stroke="#aaa" stroke-width=".5"/>
<path d="M2 27 L31 27 L32 31.5 L1 31.5Z" fill="#f2f2f2" stroke="#9a9a9a" stroke-width=".6"/>
<path d="M24 24 L30 24" stroke="#ccc" stroke-width=".8"/>
</svg>
<div class="dl" style="left:14.5px;top:62.5px;width:90px">Computer</div>
<svg class="a" style="left:44px;top:86px" width="30" height="27" viewBox="0 0 30 27">
<defs><linearGradient id="fd4486" x1="0" y1="0" x2="0" y2="1"><stop offset="0" stop-color="#e4e4d0"/><stop offset="1" stop-color="#c4c4aa"/></linearGradient></defs>
<path d="M1 2 Q1 .5 2.5 .5 L10 .5 L12 2.5 L28 2.5 Q29.5 2.5 29.5 4 L29.5 10 L1 10Z" fill="#a6a690" stroke="#8a8a74" stroke-width=".6"/>
<path d="M.5 7 L29.5 7 L29.5 25.5 Q29.5 26.5 28.5 26.5 L1.5 26.5 Q.5 26.5 .5 25.5Z" fill="url(#fd4486)" stroke="#9a9a84" stroke-width=".6"/><path d="M8 17 L15 11 L22 17 M10 16 L10 22 L13.5 22 L13.5 18.5 L16.5 18.5 L16.5 22 L20 22 L20 16" fill="none" stroke="#8c8c76" stroke-width="1.1"/></svg>
<div class="dl" style="left:14.5px;top:115.5px;width:90px">rave's Home</div>
<svg class="a" style="left:44px;top:152px" width="30" height="30" viewBox="0 0 30 30">
<defs><radialGradient id="dsc" cx=".4" cy=".35" r=".7"><stop offset="0" stop-color="#ffffff"/><stop offset=".5" stop-color="#d8d8dc"/><stop offset=".8" stop-color="#b8b8c0"/><stop offset="1" stop-color="#a0a0a8"/></radialGradient></defs>
<circle cx="15" cy="15" r="14.3" fill="url(#dsc)" stroke="#9a9aa0" stroke-width=".6"/>
<path d="M15 15 L26 8 A13 13 0 0 1 28 16Z" fill="#e8e0c0" opacity=".5"/>
<circle cx="15" cy="15" r="4" fill="#d0d0d0" stroke="#999" stroke-width=".5"/>
<circle cx="15" cy="15" r="2.3" fill="#1a1a1a"/>
</svg>
<div class="dl" style="left:9.5px;top:181.5px;width:100px;letter-spacing:-.4px">Fedora-MATE-Live-</div>
<div class="dl" style="left:9.5px;top:193px;width:100px">24-20160406-n-0</div>
<svg class="a" style="left:46px;top:217px" width="26" height="31" viewBox="0 0 26 31">
<defs><linearGradient id="tr" x1="0" y1="0" x2="1" y2="0"><stop offset="0" stop-color="#8a8a8a"/><stop offset=".3" stop-color="#e8e8e8"/><stop offset=".6" stop-color="#c0c0c0"/><stop offset="1" stop-color="#7a7a7a"/></linearGradient></defs>
<path d="M2 7 L24 7 L22 29 Q13 31 4 29Z" fill="url(#tr)" stroke="#6a6a6a" stroke-width=".6"/>
<ellipse cx="13" cy="7" rx="11.5" ry="3" fill="#d8d8d8" stroke="#777" stroke-width=".6"/>
<path d="M5 6 Q8 1 12 3 Q15 0 19 3 Q22 3 21 6 Q13 9 5 6Z" fill="#f0f4f8" stroke="#b0b8c0" stroke-width=".5"/>
<path d="M7 11 L8 27 M13 11 L13 28 M19 11 L18 27" stroke="#a0a0a0" stroke-width=".6"/>
</svg>
<div class="dl" style="left:14.5px;top:249px;width:90px">Trash</div>
<div class="a" style="left:44px;top:272px;width:44px;height:25px;background:#0a1530;overflow:hidden"><div class="a" style="left:0;top:0;width:44px;height:2px;background:#3a5680"></div><div class="a" style="left:0;bottom:0;width:44px;height:2px;background:#3a5680"></div><div class="a" style="left:4px;top:7px;width:11px;height:8px;background:#4a76aa"></div><div class="a" style="left:31px;top:6px;width:12px;height:13px;background:#4f7db4"></div></div>
<div class="a" style="left:27px;top:298px;width:79px;height:13px;background:#4a7dc0;border-radius:3px"></div>
<div class="dl" style="left:27px;top:299px;width:79px;text-shadow:none;color:#fff">MATE-1.14_1.png</div>
<svg class="a" style="left:44px;top:337px" width="30" height="31" viewBox="0 0 30 31">
<defs><linearGradient id="fd44337" x1="0" y1="0" x2="0" y2="1"><stop offset="0" stop-color="#e4e4d0"/><stop offset="1" stop-color="#c4c4aa"/></linearGradient></defs>
<path d="M1 2 Q1 .5 2.5 .5 L10 .5 L12 2.5 L28 2.5 Q29.5 2.5 29.5 4 L29.5 10 L1 10Z" fill="#a6a690" stroke="#8a8a74" stroke-width=".6"/>
<path d="M.5 7 L29.5 7 L29.5 25.5 Q29.5 26.5 28.5 26.5 L1.5 26.5 Q.5 26.5 .5 25.5Z" fill="url(#fd44337)" stroke="#9a9a84" stroke-width=".6"/><rect x="0" y="27.5" width="30" height="1.5" fill="#d0d0d0"/><rect x="11" y="26.5" width="8" height="3.5" fill="#e8e8e8" stroke="#888" stroke-width=".5"/></svg>
<div class="dl" style="left:14.5px;top:368.5px;width:90px">Programme</div>
<svg class="a" style="left:44px;top:390px" width="30" height="31" viewBox="0 0 30 31">
<defs><linearGradient id="fd44390" x1="0" y1="0" x2="0" y2="1"><stop offset="0" stop-color="#e4e4d0"/><stop offset="1" stop-color="#c4c4aa"/></linearGradient></defs>
<path d="M1 2 Q1 .5 2.5 .5 L10 .5 L12 2.5 L28 2.5 Q29.5 2.5 29.5 4 L29.5 10 L1 10Z" fill="#a6a690" stroke="#8a8a74" stroke-width=".6"/>
<path d="M.5 7 L29.5 7 L29.5 25.5 Q29.5 26.5 28.5 26.5 L1.5 26.5 Q.5 26.5 .5 25.5Z" fill="url(#fd44390)" stroke="#9a9a84" stroke-width=".6"/><rect x="0" y="27.5" width="30" height="1.5" fill="#d0d0d0"/><rect x="11" y="26.5" width="8" height="3.5" fill="#e8e8e8" stroke="#888" stroke-width=".5"/></svg>
<div class="dl" style="left:14.5px;top:422px;width:90px">Jackass</div>
<svg class="a" style="left:44px;top:443px" width="30" height="31" viewBox="0 0 30 31">
<defs><linearGradient id="fd44443" x1="0" y1="0" x2="0" y2="1"><stop offset="0" stop-color="#e4e4d0"/><stop offset="1" stop-color="#c4c4aa"/></linearGradient></defs>
<path d="M1 2 Q1 .5 2.5 .5 L10 .5 L12 2.5 L28 2.5 Q29.5 2.5 29.5 4 L29.5 10 L1 10Z" fill="#a6a690" stroke="#8a8a74" stroke-width=".6"/>
<path d="M.5 7 L29.5 7 L29.5 25.5 Q29.5 26.5 28.5 26.5 L1.5 26.5 Q.5 26.5 .5 25.5Z" fill="url(#fd44443)" stroke="#9a9a84" stroke-width=".6"/><rect x="0" y="27.5" width="30" height="1.5" fill="#d0d0d0"/><rect x="11" y="26.5" width="8" height="3.5" fill="#e8e8e8" stroke="#888" stroke-width=".5"/></svg>
<div class="dl" style="left:14.5px;top:475px;width:90px">mock</div>
<div class="a" style="left:44px;top:499px;width:44px;height:25px;background:#0a1228;overflow:hidden"><div class="a" style="left:0;top:0;width:44px;height:2px;background:#b8bcc4"></div><div class="a" style="left:0;bottom:0;width:44px;height:2px;background:#b8bcc4"></div><div class="a" style="left:1px;top:1px;width:4px;height:4px;background:#c8d4e4"></div><div class="a" style="left:5px;top:3px;width:4px;height:4px;background:#e8e8e8"></div><div class="a" style="left:25px;top:2px;width:18px;height:13px;background:#ececec"></div><div class="a" style="left:5px;top:12px;width:15px;height:10px;background:#000"></div><div class="a" style="left:5px;top:12px;width:15px;height:2px;background:#c8c8c8"></div></div>
<div class="dl" style="left:31px;top:525px;width:90px;text-align:left">MATE-1.4_2.png</div>
<div class="a" style="left:44px;top:552px;width:44px;height:25px;background:#0a1228;overflow:hidden"><div class="a" style="left:0;top:0;width:44px;height:2px;background:#b8bcc4"></div><div class="a" style="left:0;bottom:0;width:44px;height:2px;background:#b8bcc4"></div><div class="a" style="left:4px;top:1px;width:9px;height:2px;background:#b8cce8"></div><div class="a" style="left:4px;top:3px;width:4px;height:4px;background:#e8e8e8"></div><div class="a" style="left:13px;top:3px;width:6px;height:5px;background:#e8e8e8"></div><div class="a" style="left:26px;top:1px;width:13px;height:10px;background:#e4e4e4"></div><div class="a" style="left:4px;top:11px;width:17px;height:12px;background:#ececec"></div><div class="a" style="left:24px;top:11px;width:17px;height:12px;background:#e8e8e8"></div></div>
<div class="a" style="left:26px;top:578px;width:80px;height:13px;border:1px solid #5a6f94;border-radius:1px"></div>
<div class="dl" style="left:29px;top:578px;width:90px;text-align:left">MATE-1.14_3.png</div>
<div class="a" style="left:44px;top:606px;width:44px;height:24px;background:#0a1228;overflow:hidden"><div class="a" style="left:0;top:0;width:44px;height:2px;background:#b8bcc4"></div><div class="a" style="left:0;bottom:0;width:44px;height:2px;background:#b8bcc4"></div><div class="a" style="left:3px;top:0px;width:7px;height:11px;background:#e4e4e4"></div><div class="a" style="left:3px;top:7px;width:7px;height:2px;background:#8fb0c8"></div><div class="a" style="left:19px;top:3px;width:17px;height:12px;background:#e4e4e4"></div><div class="a" style="left:37px;top:0px;width:6px;height:13px;background:#c8d8ec"></div><div class="a" style="left:4px;top:12px;width:14px;height:12px;background:#ececec"></div></div>
<div class="dl" style="left:29px;top:632px;width:90px;text-align:left">MATE-1.14_4.png</div>
<div class="a" style="left:149px;top:424px;width:42px;height:5px;background:#0a1430;border-bottom:1px solid #b0b4c0"></div>
<div class="a" style="left:173px;top:424px;width:12px;height:4px;background:#e0e0e0"></div>
<div class="dl" style="left:120.0px;top:432px;width:100px;letter-spacing:-.4px">MATE-1.14_12.png</div>
<!-- ===== Window 1: Appearance Preferences ===== -->
<div class="win" style="left:109px;top:33px;width:527px;height:392px"><div class="tbar"></div></div>
<div class="dot" style="left:117px;top:41px"></div>
<div class="lbl b" style="left:298px;top:36px;color:#a3a3a3">Appearance Preferences</div>
<div class="wbtn" style="left:588px;top:36px"></div>
<svg class="a" style="left:591px;top:40px" width="7" height="5"><path d="M1 1 L3.5 3.5 L6 1" fill="none" stroke="#707070" stroke-width="1.2"/></svg>
<div class="wbtn" style="left:604px;top:36px"></div>
<svg class="a" style="left:607px;top:40px" width="7" height="5"><path d="M1 4 L3.5 1.5 L6 4" fill="none" stroke="#707070" stroke-width="1.2"/></svg>
<div class="wbtn" style="left:620px;top:36px"></div>
<svg class="a" style="left:623px;top:39px" width="7" height="7"><path d="M1 1 L6 6 M6 1 L1 6" fill="none" stroke="#606060" stroke-width="1.3"/></svg>
<!-- tabs -->
<div class="pane" style="left:118px;top:75px;width:510px;height:316px"></div>
<div class="tab" style="left:118px;top:61px;width:37px">Theme</div>
<div class="tab" style="left:157px;top:61px;width:58px">Background</div>
<div class="tab act" style="left:217px;top:60px;width:30px">Fonts</div>
<div class="tab" style="left:248px;top:61px;width:46px">Interface</div>
<!-- font rows -->
<div class="lbl" style="left:127px;top:86px">Application font:</div>
<div class="lbl" style="left:127px;top:107px">Document font:</div>
<div class="lbl" style="left:127px;top:127px">Desktop font:</div>
<div class="lbl" style="left:127px;top:148px">Window title font:</div>
<div class="lbl" style="left:127px;top:169px">Fixed width font:</div>
<div class="btn" style="left:212px;top:84px;width:406px;height:16px"></div>
<div class="btn" style="left:212px;top:105px;width:406px;height:16px"></div>
<div class="btn" style="left:212px;top:125px;width:406px;height:16px"></div>
<div class="btn" style="left:212px;top:146px;width:406px;height:16px"></div>
<div class="btn" style="left:212px;top:167px;width:406px;height:16px"></div>
<div class="a" style="left:596px;top:87px;width:1px;height:10px;background:#d0d0d0"></div>
<div class="a" style="left:596px;top:108px;width:1px;height:10px;background:#d0d0d0"></div>
<div class="a" style="left:596px;top:128px;width:1px;height:10px;background:#d0d0d0"></div>
<div class="a" style="left:596px;top:149px;width:1px;height:10px;background:#d0d0d0"></div>
<div class="a" style="left:596px;top:170px;width:1px;height:10px;background:#d0d0d0"></div>
<div class="lbl" style="left:394px;top:86px;color:#3a3a3a">Sans</div>
<div class="lbl" style="left:394px;top:107px;color:#3a3a3a">Sans</div>
<div class="lbl" style="left:394px;top:127px;color:#3a3a3a">Sans</div>
<div class="lbl b" style="left:382px;top:148px;color:#222">Sans Bold</div>
<div class="lbl" style="left:382px;top:169px;font-family:'Liberation Mono',monospace;font-size:10px;color:#3a3a3a;letter-spacing:-.65px">Monospace</div>
<div class="lbl" style="left:601px;top:86px">10</div>
<div class="lbl" style="left:601px;top:107px">10</div>
<div class="lbl" style="left:601px;top:127px">10</div>
<div class="lbl" style="left:601px;top:148px">10</div>
<div class="lbl" style="left:601px;top:168px">10</div>
<!-- rendering -->
<div class="lbl b" style="left:127px;top:194px;color:#2a2a2a">Rendering</div>
<div class="rmin" style="left:136px;top:211px"></div>
<div class="lbl" style="left:150px;top:210px;color:#4a4a4a">Monochrome</div>
<div class="prev" style="left:134px;top:226px;width:239px;height:24px;line-height:22px"><span class="r">abcfgop AO </span><i>abcfgop</i></div>
<div class="rmin" style="left:136px;top:257px"></div>
<div class="lbl" style="left:150px;top:256px;color:#4a4a4a">Best contrast</div>
<div class="prev" style="left:134px;top:272px;width:239px;height:24px;line-height:22px"><span class="r">abcfgop AO </span><i>abcfgop</i></div>
<div class="rmin" style="left:382px;top:211px"></div>
<div class="lbl" style="left:396px;top:210px;color:#4a4a4a">Best shapes</div>
<div class="prev" style="left:380px;top:226px;width:239px;height:24px;line-height:22px"><span class="r">abcfgop AO </span><i>abcfgop</i></div>
<div class="rmin" style="left:382px;top:257px"></div>
<div class="lbl" style="left:396px;top:256px;color:#4a4a4a">Subpixel smoothing (LCDs)</div>
<div class="prev" style="left:380px;top:272px;width:239px;height:24px;line-height:22px"><span class="r">abcfgop AO </span><i>abcfgop</i></div>
<div class="btn" style="left:562px;top:308px;width:56px;height:16px;line-height:15px">Details...</div>
<!-- bottom buttons -->
<div class="btn" style="left:118px;top:400px;width:55px;height:16px;line-height:14px;text-align:left;padding-left:23px">Help</div>
<svg class="a" style="left:129px;top:402px" width="12" height="12" viewBox="0 0 12 12"><circle cx="6" cy="6" r="5.3" fill="#fbfbfb" stroke="#e6cdb4" stroke-width=".7"/><path d="M2.64 4.71 A3.6 3.6 0 0 1 4.71 2.64 M7.29 2.64 A3.6 3.6 0 0 1 9.36 4.71" fill="none" stroke="#74b84a" stroke-width="2.4"/><path d="M9.36 7.29 A3.6 3.6 0 0 1 7.29 9.36 M4.71 9.36 A3.6 3.6 0 0 1 2.64 7.29" fill="none" stroke="#2f7a1c" stroke-width="2.6"/><circle cx="6" cy="6" r="1.8" fill="#f0f0f0"/></svg>
<div class="btn" style="left:572px;top:400px;width:55px;height:16px;line-height:14px;text-align:left;padding-left:21px">Close</div>
<svg class="a" style="left:583px;top:404px" width="8" height="8" viewBox="0 0 8 8"><path d="M1.2 1.2 L6.8 6.8 M6.8 1.2 L1.2 6.8" stroke="#8e8e8a" stroke-width="1.9" stroke-linecap="round"/></svg>
<!-- ===== Window 2: Font Rendering Details ===== -->
<div class="win" style="left:824px;top:37px;width:382px;height:361px"><div class="tbar"></div></div>
<div class="dot" style="left:831px;top:45px"></div>
<div class="lbl b" style="left:960px;top:40px;color:#a3a3a3">Font Rendering Details</div>
<div class="wbtn" style="left:1189px;top:39px"></div>
<svg class="a" style="left:1192px;top:42px" width="7" height="7"><path d="M1 1 L6 6 M6 1 L1 6" fill="none" stroke="#606060" stroke-width="1.3"/></svg>
<div class="lbl" style="left:832px;top:67px;color:#3a3a3a">Resolution:</div>
<div class="a" style="left:888px;top:64px;width:37px;height:15px;background:#fff;border:1px solid #a8a8a8;border-radius:2px"></div>
<div class="a" style="left:891px;top:66px;width:12px;height:11px;background:#4a7fc4"></div>
<div class="lbl" style="left:891px;top:67px;color:#fff;font-size:10px">96</div>
<div class="a" style="left:915px;top:65px;width:9px;height:13px;background:linear-gradient(#f0f0f0,#dadada);border-left:1px solid #c8c8c8"></div>
<svg class="a" style="left:916px;top:66px" width="7" height="11"><path d="M1 4 L3.5 1 L6 4Z M1 7 L3.5 10 L6 7Z" fill="#555"/></svg>
<div class="lbl" style="left:929px;top:67px;color:#3a3a3a">dots per inch</div>
<div class="lbl b" style="left:832px;top:92px;color:#2a2a2a">Smoothing</div>
<div class="radio" style="left:841px;top:109px"></div>
<div class="lbl" style="left:854px;top:108px;color:#4a4a4a">None</div>
<div class="radio" style="left:1023px;top:109px"></div>
<div class="lbl" style="left:1037px;top:108px;color:#4a4a4a">Grayscale</div>
<div class="prev p2" style="left:840px;top:122px;width:175px;height:24px"><span class="r">abcfgop AO </span><i>abcfgop</i></div>
<div class="prev p2" style="left:1022px;top:122px;width:175px;height:24px"><span class="r">abcfgop AO </span><i>abcfgop</i></div>
<div class="radio on" style="left:841px;top:152px"></div>
<div class="lbl" style="left:854px;top:151px;color:#4a4a4a">Subpixel (LCDs)</div>
<div class="prev p2" style="left:840px;top:165px;width:175px;height:24px"><span class="r">abcfgop AO </span><i>abcfgop</i></div>
<div class="lbl b" style="left:832px;top:200px;color:#2a2a2a">Hinting</div>
<div class="radio" style="left:841px;top:218px"></div>
<div class="lbl" style="left:854px;top:217px;color:#4a4a4a">None</div>
<div class="radio on" style="left:1023px;top:218px"></div>
<div class="lbl" style="left:1037px;top:217px;color:#4a4a4a">Slight</div>
<div class="prev p2" style="left:840px;top:230px;width:175px;height:24px"><span class="r">abcfgop AO </span><i>abcfgop</i></div>
<div class="prev p2" style="left:1022px;top:230px;width:175px;height:24px"><span class="r">abcfgop AO </span><i>abcfgop</i></div>
<div class="radio" style="left:841px;top:261px"></div>
<div class="lbl" style="left:854px;top:260px;color:#4a4a4a">Medium</div>
<div class="radio" style="left:1023px;top:261px"></div>
<div class="lbl" style="left:1037px;top:260px;color:#4a4a4a">Full</div>
<div class="prev p2" style="left:840px;top:274px;width:175px;height:24px"><span class="r">abcfgop AO </span><i>abcfgop</i></div>
<div class="prev p2" style="left:1022px;top:274px;width:175px;height:24px"><span class="r">abcfgop AO </span><i>abcfgop</i></div>
<div class="lbl b" style="left:832px;top:309px;color:#2a2a2a">Subpixel Order</div>
<div class="radio on" style="left:841px;top:328px"></div>
<div class="lbl" style="left:854px;top:327px;color:#4a4a4a">RGB</div>
<div class="radio" style="left:1023px;top:328px"></div>
<div class="lbl" style="left:1037px;top:327px;color:#4a4a4a">BGR</div>
<div class="radio" style="left:841px;top:351px"></div>
<div class="lbl" style="left:854px;top:350px;color:#4a4a4a">VRGB</div>
<div class="radio" style="left:1023px;top:351px"></div>
<div class="lbl" style="left:1037px;top:350px;color:#4a4a4a">VBGR</div>
<div class="a" style="left:996px;top:323px;width:19px;height:19px;background:#000;padding:1px;display:flex"><div style="flex:1;background:#ff0000"></div><div style="flex:1;background:#00ee00"></div><div style="flex:1;background:#0000ff"></div></div>
<div class="a" style="left:1178px;top:323px;width:19px;height:19px;background:#000;padding:1px;display:flex"><div style="flex:1;background:#0000ff"></div><div style="flex:1;background:#00ee00"></div><div style="flex:1;background:#ff0000"></div></div>
<div class="a" style="left:996px;top:346px;width:19px;height:19px;background:#000;padding:1px;display:flex;flex-direction:column"><div style="flex:1;background:#ff0000"></div><div style="flex:1;background:#00ee00"></div><div style="flex:1;background:#0000ff"></div></div>
<div class="a" style="left:1178px;top:346px;width:19px;height:19px;background:#000;padding:1px;display:flex;flex-direction:column"><div style="flex:1;background:#0000ff"></div><div style="flex:1;background:#00ee00"></div><div style="flex:1;background:#ff0000"></div></div>
<div class="btn" style="left:1141px;top:374px;width:56px;height:16px;line-height:14px;text-align:left;padding-left:21px">Close</div>
<svg class="a" style="left:1152px;top:378px" width="8" height="8" viewBox="0 0 8 8"><path d="M1.2 1.2 L6.8 6.8 M6.8 1.2 L1.2 6.8" stroke="#8e8e8a" stroke-width="1.9" stroke-linecap="round"/></svg>
<!-- ===== Window 3: Preferred Applications ===== -->
<div class="win" style="left:95px;top:460px;width:255px;height:222px"><div class="tbar"></div></div>
<div class="dot" style="left:102px;top:468px"></div>
<div class="lbl b" style="left:169px;top:463px;color:#a3a3a3">Preferred Applications</div>
<div class="wbtn" style="left:333px;top:463px"></div>
<svg class="a" style="left:336px;top:466px" width="7" height="7"><path d="M1 1 L6 6 M6 1 L1 6" fill="none" stroke="#606060" stroke-width="1.3"/></svg>
<div class="pane" style="left:103px;top:502px;width:238px;height:147px"></div>
<div class="tab act" style="left:104px;top:487px;width:41px">Internet</div>
<div class="tab" style="left:146px;top:488px;width:56px">Multimedia</div>
<div class="tab" style="left:204px;top:488px;width:39px">System</div>
<div class="tab" style="left:245px;top:488px;width:33px">Office</div>
<div class="tab" style="left:279px;top:488px;width:62px">Accessibility</div>
<div class="lbl b" style="left:113px;top:510px;color:#2a2a2a">Web Browser</div>
<svg class="a" style="left:112px;top:524px" width="22" height="22" viewBox="0 0 22 22">
 <defs><radialGradient id="gl" cx=".35" cy=".3" r=".8"><stop offset="0" stop-color="#e8f0fa"/><stop offset=".6" stop-color="#7da3d0"/><stop offset="1" stop-color="#3f6aa8"/></radialGradient></defs>
 <circle cx="11" cy="11" r="10" fill="url(#gl)" stroke="#4b6f9f" stroke-width="1"/>
 <path d="M7 6 Q11 4 15 6 L14 9 Q12 8 10 10 L12 14 L9 16 Q7 12 6 10Z" fill="#dfe8f2" opacity=".8"/>
 <path d="M4 19 L4 10 L11 16 L8 16 L10 20 L8.5 21 L6.5 17Z" fill="#fff" stroke="#8a9ab0" stroke-width=".6"/>
</svg>
<div class="btn" style="left:142px;top:525px;width:190px;height:19px;text-align:left"></div>
<svg class="a" style="left:145px;top:527px" width="14" height="14" viewBox="0 0 14 14">
 <circle cx="7" cy="7" r="6.5" fill="#e85d10"/><circle cx="7.8" cy="6.4" r="4.2" fill="#2f63c0"/><path d="M1 7 C1 3 4 0.8 7 0.8 C5 2 4 4 5 6 C3.5 6.5 3 8 4 10 C2.5 9.5 1.5 8.5 1 7Z" fill="#ffb33a"/><path d="M2 10 C4 13 9 14 12 10 C10 12 6 12 4.5 9.5Z" fill="#d84a00"/>
</svg>
<div class="lbl" style="left:161px;top:529px;color:#3a3a3a">Firefox</div>
<svg class="a" style="left:322px;top:529px" width="6" height="11"><path d="M0.5 4 L3 1 L5.5 4Z M0.5 7 L3 10 L5.5 7Z" fill="#444"/></svg>
<div class="lbl b" style="left:113px;top:557px;color:#2a2a2a">Mail Reader</div>
<svg class="a" style="left:113px;top:571px" width="22" height="23" viewBox="0 0 22 23">
 <path d="M1.5 9 L11 1.5 L20.5 9 L20.5 21.5 L1.5 21.5Z" fill="#f4f4f0" stroke="#a8a8a0" stroke-width="1"/>
 <path d="M3 10 Q11 5 19 10 L19 13 Q11 17 3 13Z" fill="#d8dcd4"/>
 <path d="M2 21 L9 14 M20 21 L13 14" stroke="#c0c0b8" stroke-width="1"/>
</svg>
<div class="btn" style="left:142px;top:572px;width:190px;height:19px;text-align:left"></div>
<svg class="a" style="left:146px;top:574px" width="13" height="14" viewBox="0 0 13 14">
 <circle cx="6.5" cy="6" r="5.8" fill="#a8c8e8" stroke="#5a80b0" stroke-width=".7"/><path d="M3 4 C5 2 8 2 10 4 L8 6 L9 9 L5 9 L4 6Z" fill="#2f7a2a"/><rect x="2.5" y="8.5" width="8" height="5" fill="#f4f4f4" stroke="#999" stroke-width=".6"/>
</svg>
<div class="lbl" style="left:161px;top:576px;color:#3a3a3a">Claws Mail</div>
<svg class="a" style="left:322px;top:576px" width="6" height="11"><path d="M0.5 4 L3 1 L5.5 4Z M0.5 7 L3 10 L5.5 7Z" fill="#444"/></svg>
<div class="btn" style="left:104px;top:657px;width:56px;height:16px;line-height:14px;text-align:left;padding-left:23px">Help</div>
<svg class="a" style="left:115px;top:659px" width="12" height="12" viewBox="0 0 12 12"><circle cx="6" cy="6" r="5.3" fill="#fbfbfb" stroke="#e6cdb4" stroke-width=".7"/><path d="M2.64 4.71 A3.6 3.6 0 0 1 4.71 2.64 M7.29 2.64 A3.6 3.6 0 0 1 9.36 4.71" fill="none" stroke="#74b84a" stroke-width="2.4"/><path d="M9.36 7.29 A3.6 3.6 0 0 1 7.29 9.36 M4.71 9.36 A3.6 3.6 0 0 1 2.64 7.29" fill="none" stroke="#2f7a1c" stroke-width="2.6"/><circle cx="6" cy="6" r="1.8" fill="#f0f0f0"/></svg>
<div class="btn" style="left:285px;top:657px;width:56px;height:16px;line-height:14px;text-align:left;padding-left:21px">Close</div>
<svg class="a" style="left:296px;top:661px" width="8" height="8" viewBox="0 0 8 8"><path d="M1.2 1.2 L6.8 6.8 M6.8 1.2 L1.2 6.8" stroke="#8e8e8a" stroke-width="1.9" stroke-linecap="round"/></svg>
<!-- ===== Window 4: Startup Applications Preferences ===== -->
<div class="win" style="left:662px;top:419px;width:331px;height:263px"><div class="tbar"></div></div>
<div class="dot" style="left:669px;top:427px"></div>
<div class="lbl b" style="left:748px;top:422px;color:#2e2e2e">Startup Applications Preferences</div>
<div class="wbtn" style="left:977px;top:422px"></div>
<svg class="a" style="left:980px;top:425px" width="7" height="7"><path d="M1 1 L6 6 M6 1 L1 6" fill="none" stroke="#505050" stroke-width="1.3"/></svg>
<div class="a" style="left:673px;top:447px;width:310px;height:17px;background:linear-gradient(#d8d8d8,#cdcdcd);border:1px solid #bcbcbc;border-bottom:none;border-radius:3px 3px 0 0"></div>
<div class="pane" style="left:673px;top:463px;width:310px;height:174px;border-radius:0 0 3px 3px"></div>
<div class="a" style="left:673px;top:447px;width:103px;height:18px;background:linear-gradient(#f4f4f4,#e8e8e8);border:1px solid #bcbcbc;border-bottom:none;border-radius:3px 3px 0 0"></div>
<div class="lbl" style="left:687px;top:451px;color:#7a7a7a">Startup Programs</div>
<div class="a" style="left:838px;top:448px;width:1px;height:16px;background:#bcbcbc"></div>
<div class="lbl" style="left:791px;top:451px;color:#7a7a7a">Options</div>
<div class="lbl" style="left:683px;top:473px;color:#3a3a3a">Additional startup programs:</div>
<div class="a" style="left:681px;top:488px;width:229px;height:140px;background:#f8f8f8;border:1px solid #b0b0b0;overflow:hidden">
<div class="a" style="left:3px;top:7px;width:10px;height:10px;background:linear-gradient(#72a8de,#4f8ccc);border:1px solid #3f74b0;border-radius:1px"></div>
<svg class="a" style="left:3px;top:7px" width="10" height="10"><path d="M2 5 L4.2 7.3 L8 2.5" fill="none" stroke="#fff" stroke-width="1.5"/></svg>
<svg class="a" style="left:17px;top:3px" width="12" height="16" viewBox="0 0 12 16"><ellipse cx="6" cy="8" rx="5.8" ry="7.8" fill="#3a6fc0"/><path d="M3 5 L8.5 10.5 L6 13 L6 3 L8.5 5.5 L3 11" fill="none" stroke="#fff" stroke-width="1.1"/></svg>
<div class="lbl b" style="left:33px;top:2px;color:#1e1e1e;letter-spacing:.1px">Blueman Applet</div>
<div class="lbl" style="left:33px;top:12px;color:#3e3e3e">Blueman Bluetooth Manager</div>
<div class="a" style="left:3px;top:30px;width:10px;height:10px;background:linear-gradient(#72a8de,#4f8ccc);border:1px solid #3f74b0;border-radius:1px"></div>
<svg class="a" style="left:3px;top:30px" width="10" height="10"><path d="M2 5 L4.2 7.3 L8 2.5" fill="none" stroke="#fff" stroke-width="1.5"/></svg>
<svg class="a" style="left:16px;top:26px" width="15" height="16" viewBox="0 0 15 16"><path d="M13.81 7.66 L15.15 7.79 L15.15 9.21 L13.81 9.34 L13.28 10.60 L14.15 11.64 L13.14 12.65 L12.10 11.78 L10.84 12.31 L10.71 13.65 L9.29 13.65 L9.16 12.31 L7.90 11.78 L6.86 12.65 L5.85 11.64 L6.72 10.60 L6.19 9.34 L4.85 9.21 L4.85 7.79 L6.19 7.66 L6.72 6.40 L5.85 5.36 L6.86 4.35 L7.90 5.22 L9.16 4.69 L9.29 3.35 L10.71 3.35 L10.84 4.69 L12.10 5.22 L13.14 4.35 L14.15 5.36 L13.28 6.40Z" fill="#a8a8a8" stroke="#404040" stroke-width=".8"/><circle cx="10" cy="8.5" r="1.5" fill="#707070"/><path d="M7.58 3.78 L8.63 3.89 L8.63 5.31 L7.58 5.42 L6.90 6.60 L7.33 7.57 L6.10 8.28 L5.48 7.42 L4.12 7.42 L3.50 8.28 L2.27 7.57 L2.70 6.60 L2.02 5.42 L0.97 5.31 L0.97 3.89 L2.02 3.78 L2.70 2.60 L2.27 1.63 L3.50 0.92 L4.12 1.78 L5.48 1.78 L6.10 0.92 L7.33 1.63 L6.90 2.60Z" fill="#f4f4f4" stroke="#404040" stroke-width=".8"/><rect x="3.6" y="3.6" width="2.4" height="1.8" fill="#888"/><path d="M7.38 10.78 L8.43 10.89 L8.43 12.31 L7.38 12.42 L6.70 13.60 L7.13 14.57 L5.90 15.28 L5.28 14.42 L3.92 14.42 L3.30 15.28 L2.07 14.57 L2.50 13.60 L1.82 12.42 L0.77 12.31 L0.77 10.89 L1.82 10.78 L2.50 9.60 L2.07 8.63 L3.30 7.92 L3.92 8.78 L5.28 8.78 L5.90 7.92 L7.13 8.63 L6.70 9.60Z" fill="#f4f4f4" stroke="#404040" stroke-width=".8"/><rect x="3.4" y="10.6" width="2.4" height="2" fill="#555"/></svg>
<div class="lbl b" style="left:33px;top:25px;color:#1e1e1e;letter-spacing:.1px">Certificate and Key Storage</div>
<div class="lbl" style="left:33px;top:35px;color:#3e3e3e">GNOME Keyring: PKCS#11 Component</div>
<div class="a" style="left:3px;top:53px;width:10px;height:10px;background:linear-gradient(#72a8de,#4f8ccc);border:1px solid #3f74b0;border-radius:1px"></div>
<svg class="a" style="left:3px;top:53px" width="10" height="10"><path d="M2 5 L4.2 7.3 L8 2.5" fill="none" stroke="#fff" stroke-width="1.5"/></svg>
<svg class="a" style="left:16px;top:49px" width="15" height="16" viewBox="0 0 15 16"><path d="M13.81 7.66 L15.15 7.79 L15.15 9.21 L13.81 9.34 L13.28 10.60 L14.15 11.64 L13.14 12.65 L12.10 11.78 L10.84 12.31 L10.71 13.65 L9.29 13.65 L9.16 12.31 L7.90 11.78 L6.86 12.65 L5.85 11.64 L6.72 10.60 L6.19 9.34 L4.85 9.21 L4.85 7.79 L6.19 7.66 L6.72 6.40 L5.85 5.36 L6.86 4.35 L7.90 5.22 L9.16 4.69 L9.29 3.35 L10.71 3.35 L10.84 4.69 L12.10 5.22 L13.14 4.35 L14.15 5.36 L13.28 6.40Z" fill="#a8a8a8" stroke="#404040" stroke-width=".8"/><circle cx="10" cy="8.5" r="1.5" fill="#707070"/><path d="M7.58 3.78 L8.63 3.89 L8.63 5.31 L7.58 5.42 L6.90 6.60 L7.33 7.57 L6.10 8.28 L5.48 7.42 L4.12 7.42 L3.50 8.28 L2.27 7.57 L2.70 6.60 L2.02 5.42 L0.97 5.31 L0.97 3.89 L2.02 3.78 L2.70 2.60 L2.27 1.63 L3.50 0.92 L4.12 1.78 L5.48 1.78 L6.10 0.92 L7.33 1.63 L6.90 2.60Z" fill="#f4f4f4" stroke="#404040" stroke-width=".8"/><rect x="3.6" y="3.6" width="2.4" height="1.8" fill="#888"/><path d="M7.38 10.78 L8.43 10.89 L8.43 12.31 L7.38 12.42 L6.70 13.60 L7.13 14.57 L5.90 15.28 L5.28 14.42 L3.92 14.42 L3.30 15.28 L2.07 14.57 L2.50 13.60 L1.82 12.42 L0.77 12.31 L0.77 10.89 L1.82 10.78 L2.50 9.60 L2.07 8.63 L3.30 7.92 L3.92 8.78 L5.28 8.78 L5.90 7.92 L7.13 8.63 L6.70 9.60Z" fill="#f4f4f4" stroke="#404040" stroke-width=".8"/><rect x="3.4" y="10.6" width="2.4" height="2" fill="#555"/></svg>
<div class="lbl b" style="left:33px;top:48px;color:#1e1e1e;letter-spacing:.1px">Input Method starter</div>
<div class="lbl" style="left:33px;top:58px;color:#3e3e3e">Input Method starter</div>
<div class="a" style="left:3px;top:77px;width:10px;height:10px;background:linear-gradient(#72a8de,#4f8ccc);border:1px solid #3f74b0;border-radius:1px"></div>
<svg class="a" style="left:3px;top:77px" width="10" height="10"><path d="M2 5 L4.2 7.3 L8 2.5" fill="none" stroke="#fff" stroke-width="1.5"/></svg>
<svg class="a" style="left:16px;top:73px" width="15" height="16" viewBox="0 0 15 16"><path d="M13.81 7.66 L15.15 7.79 L15.15 9.21 L13.81 9.34 L13.28 10.60 L14.15 11.64 L13.14 12.65 L12.10 11.78 L10.84 12.31 L10.71 13.65 L9.29 13.65 L9.16 12.31 L7.90 11.78 L6.86 12.65 L5.85 11.64 L6.72 10.60 L6.19 9.34 L4.85 9.21 L4.85 7.79 L6.19 7.66 L6.72 6.40 L5.85 5.36 L6.86 4.35 L7.90 5.22 L9.16 4.69 L9.29 3.35 L10.71 3.35 L10.84 4.69 L12.10 5.22 L13.14 4.35 L14.15 5.36 L13.28 6.40Z" fill="#a8a8a8" stroke="#404040" stroke-width=".8"/><circle cx="10" cy="8.5" r="1.5" fill="#707070"/><path d="M7.58 3.78 L8.63 3.89 L8.63 5.31 L7.58 5.42 L6.90 6.60 L7.33 7.57 L6.10 8.28 L5.48 7.42 L4.12 7.42 L3.50 8.28 L2.27 7.57 L2.70 6.60 L2.02 5.42 L0.97 5.31 L0.97 3.89 L2.02 3.78 L2.70 2.60 L2.27 1.63 L3.50 0.92 L4.12 1.78 L5.48 1.78 L6.10 0.92 L7.33 1.63 L6.90 2.60Z" fill="#f4f4f4" stroke="#404040" stroke-width=".8"/><rect x="3.6" y="3.6" width="2.4" height="1.8" fill="#888"/><path d="M7.38 10.78 L8.43 10.89 L8.43 12.31 L7.38 12.42 L6.70 13.60 L7.13 14.57 L5.90 15.28 L5.28 14.42 L3.92 14.42 L3.30 15.28 L2.07 14.57 L2.50 13.60 L1.82 12.42 L0.77 12.31 L0.77 10.89 L1.82 10.78 L2.50 9.60 L2.07 8.63 L3.30 7.92 L3.92 8.78 L5.28 8.78 L5.90 7.92 L7.13 8.63 L6.70 9.60Z" fill="#f4f4f4" stroke="#404040" stroke-width=".8"/><rect x="3.4" y="10.6" width="2.4" height="2" fill="#555"/></svg>
<div class="lbl b" style="left:33px;top:72px;color:#1e1e1e;letter-spacing:.1px">Liveinst Setup</div>
<div class="lbl" style="left:33px;top:82px;color:#3e3e3e">No description</div>
<div class="a" style="left:3px;top:100px;width:10px;height:10px;background:linear-gradient(#72a8de,#4f8ccc);border:1px solid #3f74b0;border-radius:1px"></div>
<svg class="a" style="left:3px;top:100px" width="10" height="10"><path d="M2 5 L4.2 7.3 L8 2.5" fill="none" stroke="#fff" stroke-width="1.5"/></svg>
<svg class="a" style="left:16px;top:96px" width="15" height="16" viewBox="0 0 15 16"><path d="M13.81 7.66 L15.15 7.79 L15.15 9.21 L13.81 9.34 L13.28 10.60 L14.15 11.64 L13.14 12.65 L12.10 11.78 L10.84 12.31 L10.71 13.65 L9.29 13.65 L9.16 12.31 L7.90 11.78 L6.86 12.65 L5.85 11.64 L6.72 10.60 L6.19 9.34 L4.85 9.21 L4.85 7.79 L6.19 7.66 L6.72 6.40 L5.85 5.36 L6.86 4.35 L7.90 5.22 L9.16 4.69 L9.29 3.35 L10.71 3.35 L10.84 4.69 L12.10 5.22 L13.14 4.35 L14.15 5.36 L13.28 6.40Z" fill="#a8a8a8" stroke="#404040" stroke-width=".8"/><circle cx="10" cy="8.5" r="1.5" fill="#707070"/><path d="M7.58 3.78 L8.63 3.89 L8.63 5.31 L7.58 5.42 L6.90 6.60 L7.33 7.57 L6.10 8.28 L5.48 7.42 L4.12 7.42 L3.50 8.28 L2.27 7.57 L2.70 6.60 L2.02 5.42 L0.97 5.31 L0.97 3.89 L2.02 3.78 L2.70 2.60 L2.27 1.63 L3.50 0.92 L4.12 1.78 L5.48 1.78 L6.10 0.92 L7.33 1.63 L6.90 2.60Z" fill="#f4f4f4" stroke="#404040" stroke-width=".8"/><rect x="3.6" y="3.6" width="2.4" height="1.8" fill="#888"/><path d="M7.38 10.78 L8.43 10.89 L8.43 12.31 L7.38 12.42 L6.70 13.60 L7.13 14.57 L5.90 15.28 L5.28 14.42 L3.92 14.42 L3.30 15.28 L2.07 14.57 L2.50 13.60 L1.82 12.42 L0.77 12.31 L0.77 10.89 L1.82 10.78 L2.50 9.60 L2.07 8.63 L3.30 7.92 L3.92 8.78 L5.28 8.78 L5.90 7.92 L7.13 8.63 L6.70 9.60Z" fill="#f4f4f4" stroke="#404040" stroke-width=".8"/><rect x="3.4" y="10.6" width="2.4" height="2" fill="#555"/></svg>
<div class="lbl b" style="left:33px;top:95px;color:#1e1e1e;letter-spacing:.1px">MATE Settings Daemon</div>
<div class="lbl" style="left:33px;top:105px;color:#3e3e3e">No description</div>
<div class="a" style="left:3px;top:123px;width:10px;height:10px;background:linear-gradient(#72a8de,#4f8ccc);border:1px solid #3f74b0;border-radius:1px"></div>
<svg class="a" style="left:3px;top:123px" width="10" height="10"><path d="M2 5 L4.2 7.3 L8 2.5" fill="none" stroke="#fff" stroke-width="1.5"/></svg>
<svg class="a" style="left:16px;top:120px" width="15" height="14" viewBox="0 0 15 14"><rect x="5" y=".5" width="9.5" height="7" fill="#e4e4e4" stroke="#666" stroke-width=".7"/><rect x="6.2" y="1.7" width="7.1" height="4.6" fill="#3566b0"/><rect x=".5" y="4" width="9.5" height="7" fill="#e4e4e4" stroke="#666" stroke-width=".7"/><rect x="1.7" y="5.2" width="7.1" height="4.6" fill="#3566b0"/><rect x="1.5" y="11.5" width="7" height="2" fill="#ddd" stroke="#777" stroke-width=".5"/></svg>
<div class="lbl b" style="left:33px;top:118px;color:#1e1e1e;letter-spacing:.1px">Network</div>
<div class="lbl" style="left:33px;top:128px;color:#3e3e3e">Manage your network connections</div>
<div class="a" style="left:218px;top:0px;width:9px;height:138px;background:#dcdcdc;border-left:1px solid #cfcfcf"></div>
<div class="a" style="left:219px;top:12px;width:8px;height:34px;background:linear-gradient(90deg,#c8c8c8,#b8b8b8);border:1px solid #a8a8a8;border-radius:4px"></div>
<svg class="a" style="left:219px;top:2px" width="8" height="6"><path d="M1 5 L4 1.5 L7 5Z" fill="#aaa"/></svg>
<svg class="a" style="left:219px;top:129px" width="8" height="6"><path d="M1 1 L4 4.5 L7 1Z" fill="#333"/></svg>
</div>
<div class="btn" style="left:915px;top:489px;width:59px;height:20px;line-height:18px;padding-left:14px">Add</div>
<svg class="a" style="left:930px;top:493px" width="11" height="11" viewBox="0 0 11 11"><path d="M4 1 L7 1 L7 4 L10 4 L10 7 L7 7 L7 10 L4 10 L4 7 L1 7 L1 4 L4 4Z" fill="#3d6fc4" stroke="#2a5098" stroke-width=".6"/></svg>
<div class="btn" style="left:915px;top:514px;width:59px;height:20px;line-height:18px;padding-left:14px;background:linear-gradient(#dcdcdc,#d0d0d0);border-color:#bcbcbc;color:#a0a0a0">Remove</div>
<div class="a" style="left:922px;top:523px;width:8px;height:3px;background:#7f9cc8;border-radius:1px"></div>
<div class="btn" style="left:915px;top:540px;width:59px;height:20px;line-height:18px;padding-left:14px;background:linear-gradient(#dcdcdc,#d0d0d0);border-color:#bcbcbc;color:#a0a0a0">Edit</div>
<svg class="a" style="left:930px;top:543px" width="11" height="13" viewBox="0 0 11 13"><rect x=".5" y="1.5" width="9" height="11" fill="#f4f4f4" stroke="#aaa" stroke-width=".6"/><path d="M3 10 L9.5 2 L10.5 3 L4 11 L2.5 11.5Z" fill="#e0a040" stroke="#a06020" stroke-width=".5"/></svg>
<div class="btn" style="left:675px;top:650px;width:56px;height:20px;line-height:18px;text-align:left;padding-left:23px">Help</div>
<svg class="a" style="left:686px;top:653px" width="12" height="12" viewBox="0 0 12 12"><circle cx="6" cy="6" r="5.3" fill="#fbfbfb" stroke="#e6cdb4" stroke-width=".7"/><path d="M2.64 4.71 A3.6 3.6 0 0 1 4.71 2.64 M7.29 2.64 A3.6 3.6 0 0 1 9.36 4.71" fill="none" stroke="#74b84a" stroke-width="2.4"/><path d="M9.36 7.29 A3.6 3.6 0 0 1 7.29 9.36 M4.71 9.36 A3.6 3.6 0 0 1 2.64 7.29" fill="none" stroke="#2f7a1c" stroke-width="2.6"/><circle cx="6" cy="6" r="1.8" fill="#f0f0f0"/></svg>
<div class="btn" style="left:924px;top:650px;width:56px;height:20px;line-height:18px;text-align:left;padding-left:21px">Close</div>
<svg class="a" style="left:935px;top:655px" width="8" height="8" viewBox="0 0 8 8"><path d="M1.2 1.2 L6.8 6.8 M6.8 1.2 L1.2 6.8" stroke="#8e8e8a" stroke-width="1.9" stroke-linecap="round"/></svg>
<svg class="a" style="left:719px;top:448px" width="10" height="14" viewBox="0 0 10 14"><path d="M1.5 1 L1.5 11.8 L4.1 9.5 L5.8 12.6 L7.3 11.9 L5.8 8.9 L8.4 8.4Z" fill="#fff" stroke="#000" stroke-width="1" stroke-linejoin="round"/></svg>
</body></html>
